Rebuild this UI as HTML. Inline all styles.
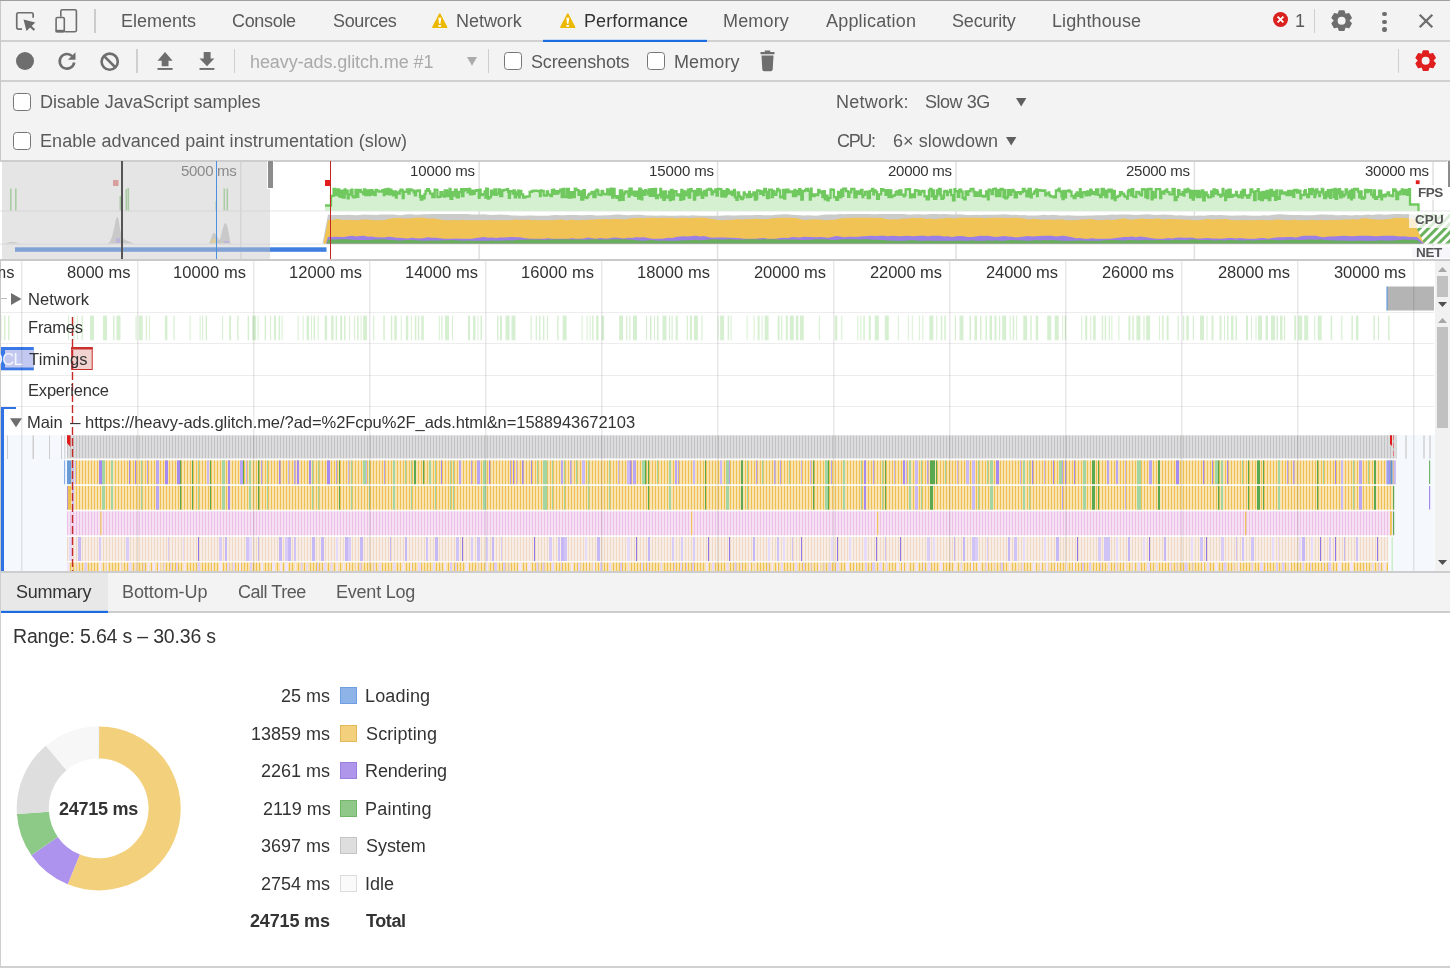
<!DOCTYPE html><html><head><meta charset="utf-8"><title>DevTools - Performance</title><style>
*{box-sizing:border-box;margin:0;padding:0}
html,body{width:1450px;height:968px;overflow:hidden;background:#fff}
body{font-family:"Liberation Sans",sans-serif;color:#333;position:relative}
.a{position:absolute}
.t{position:absolute;white-space:nowrap;line-height:1;will-change:transform}
.bar{position:absolute;left:0;width:1450px;background:#f3f3f3}
.hl{position:absolute;left:0;width:1450px;height:1px;background:#cdcdcd}
.vs{position:absolute;width:1px;background:#cfcfcf}
.cb{position:absolute;width:18px;height:18px;border:1.5px solid #767676;border-radius:3.5px;background:#fff}
svg{position:absolute;overflow:visible}
</style></head><body><div class="bar" style="top:0;height:160px"></div><div class="hl" style="top:0;background:#a0a0a0"></div><div class="hl" style="top:40px;height:2px;background:#d0d0d0"></div><div class="hl" style="top:80px;height:2px;background:#d0d0d0"></div><div class="hl" style="top:160px;height:2px;background:#cdcdcd"></div><div class="a" style="left:0;top:1px;width:1px;height:159px;background:#c8c8c8"></div><svg style="left:0;top:0" width="100" height="40" viewBox="0 0 100 40"><path d="M22 29.150H18.400A1.650 1.650 0 0 1 16.750 27.500V14.400A1.650 1.650 0 0 1 18.400 12.750H31.500A1.650 1.650 0 0 1 33.150 14.400V17.700" fill="none" stroke="#6e6e6e" stroke-width="1.700"/><path d="M23.500 19.500L35.300 22.500L26.500 31Z" fill="#6a6a6a"/><path d="M29.500 25.500L34.400 30" stroke="#6a6a6a" stroke-width="2.200"/>
<path d="M60.800 16.700V11.300A1.500 1.500 0 0 1 62.300 9.800H74.900A1.500 1.500 0 0 1 76.400 11.300V30.200A1.500 1.500 0 0 1 74.900 31.700H65" fill="none" stroke="#6e6e6e" stroke-width="1.600"/><rect x="56.100" y="17.500" width="8.200" height="14.200" rx="1.300" fill="none" stroke="#6e6e6e" stroke-width="1.600"/><rect x="55.600" y="29.800" width="9.200" height="2.600" fill="#6e6e6e"/></svg><div class="vs" style="left:94px;top:9px;height:24px;width:1.500px;background:#ccc"></div><div class="t" style="left:121.10px;top:12.00px;font-size:18px;color:#5a5a5a;">Elements</div><div class="t" style="left:232.10px;top:12.00px;font-size:18px;color:#5a5a5a;letter-spacing:-0.322px;">Console</div><div class="t" style="left:332.70px;top:12.00px;font-size:18px;color:#5a5a5a;letter-spacing:-0.372px;">Sources</div><div class="t" style="left:456.30px;top:12.00px;font-size:18px;color:#5a5a5a;letter-spacing:-0.036px;">Network</div><div class="t" style="left:583.70px;top:12.00px;font-size:18px;color:#333;letter-spacing:0.097px;">Performance</div><div class="t" style="left:723.10px;top:12.00px;font-size:18px;color:#5a5a5a;letter-spacing:0.159px;">Memory</div><div class="t" style="left:826.10px;top:12.00px;font-size:18px;color:#5a5a5a;letter-spacing:0.185px;">Application</div><div class="t" style="left:951.50px;top:12.00px;font-size:18px;color:#5a5a5a;letter-spacing:-0.174px;">Security</div><div class="t" style="left:1051.50px;top:12.00px;font-size:18px;color:#5a5a5a;letter-spacing:0.104px;">Lighthouse</div><svg style="left:431.8px;top:12.800px" width="15.500" height="15.300" viewBox="0 0 15.500 15.300"><path d="M7.750 1L14.700 14.300H0.800Z" fill="#ecb800" stroke="#ecb800" stroke-width="1.500" stroke-linejoin="round"/><path d="M6.300 4.700H9.200L8.450 10.800H7.050Z" fill="#fff"/><rect x="6.400" y="12.100" width="2.700" height="1.700" fill="#fff"/></svg><svg style="left:559.8px;top:12.800px" width="15.500" height="15.300" viewBox="0 0 15.500 15.300"><path d="M7.750 1L14.700 14.300H0.800Z" fill="#ecb800" stroke="#ecb800" stroke-width="1.500" stroke-linejoin="round"/><path d="M6.300 4.700H9.200L8.450 10.800H7.050Z" fill="#fff"/><rect x="6.400" y="12.100" width="2.700" height="1.700" fill="#fff"/></svg><div class="a" style="left:543px;top:39px;width:164px;height:1px;background:rgba(26,115,232,.18)"></div><div class="a" style="left:543px;top:40px;width:164px;height:2px;background:#1a6ce0"></div><svg style="left:1273px;top:12px" width="15" height="15" viewBox="0 0 15 15"><circle cx="7.500" cy="7.500" r="7.500" fill="#d9211e"/><path d="M4.600 4.600L10.400 10.400M10.400 4.600L4.600 10.400" stroke="#fff" stroke-width="1.900"/></svg><div class="t" style="left:1294.80px;top:12.00px;font-size:18px;color:#5a5a5a;">1</div><div class="vs" style="left:1314px;top:9px;height:24px"></div><svg style="left:1331.3px;top:10.3px" width="21.3" height="21.3" viewBox="0 0 21.3 21.3"><path d="M7.34 4.15L8.32 0.93L12.98 0.93L13.96 4.15L14.63 4.53L17.90 3.77L20.24 7.81L17.94 10.27L17.94 11.03L20.24 13.49L17.90 17.53L14.63 16.77L13.96 17.15L12.98 20.37L8.32 20.37L7.34 17.15L6.67 16.77L3.40 17.53L1.06 13.49L3.36 11.03L3.36 10.27L1.06 7.81L3.40 3.77L6.67 4.53Z" fill="#6e6e6e" stroke="#6e6e6e" stroke-width="1.400" stroke-linejoin="round"/><circle cx="10.65" cy="10.65" r="4" fill="#f3f3f3"/></svg><div class="a" style="left:1382.3px;top:12px;width:4.400px;height:4.400px;border-radius:50%;background:#6e6e6e"></div><div class="a" style="left:1382.3px;top:19.5px;width:4.400px;height:4.400px;border-radius:50%;background:#6e6e6e"></div><div class="a" style="left:1382.3px;top:27.2px;width:4.400px;height:4.400px;border-radius:50%;background:#6e6e6e"></div><svg style="left:1419px;top:14px" width="14" height="14" viewBox="0 0 14 14"><path d="M0.700 0.700L13.300 13.300M13.300 0.700L0.700 13.300" stroke="#6e6e6e" stroke-width="2.300"/></svg><div class="a" style="left:16px;top:52px;width:18px;height:18px;border-radius:50%;background:#6e6e6e"></div><svg style="left:57px;top:51px" width="20" height="20" viewBox="0 0 20 20"><path d="M15.200 5.200A7.300 7.300 0 1 0 17.200 11.500" fill="none" stroke="#6e6e6e" stroke-width="2.600"/><path d="M18.500 1.200V8.800H10.900Z" fill="#6e6e6e"/></svg><svg style="left:100px;top:52px" width="20" height="20" viewBox="0 0 20 20"><circle cx="9.700" cy="9.700" r="8.100" fill="none" stroke="#6e6e6e" stroke-width="2.600"/><path d="M3.900 3.900L15.500 15.500" stroke="#6e6e6e" stroke-width="2.600"/></svg><div class="vs" style="left:136px;top:49px;height:24px;width:1.500px"></div><svg style="left:0;top:0" width="230" height="80" viewBox="0 0 230 80"><path d="M165.050 51.900L172.600 60.700H168.500V66.300H161.700V60.700H157.500Z" fill="#6e6e6e"/><rect x="157.500" y="68" width="15.100" height="1.900" fill="#6e6e6e"/><path d="M207 66.300L214.400 58.400H210.600V51.900H203.700V58.400H199.500Z" fill="#6e6e6e"/><rect x="199.500" y="68" width="14.900" height="1.900" fill="#6e6e6e"/></svg><div class="vs" style="left:234px;top:49px;height:24px"></div><div class="t" style="left:249.70px;top:53.00px;font-size:18px;color:#aaaaaa;letter-spacing:-0.076px;">heavy-ads.glitch.me #1</div><svg style="left:466.500px;top:57px" width="10" height="9" viewBox="0 0 10 9"><path d="M0 0H10L5 8.800Z" fill="#ababab"/></svg><div class="vs" style="left:487.500px;top:49px;height:24px"></div><div class="cb" style="left:504px;top:52px"></div><div class="t" style="left:530.80px;top:53.00px;font-size:18px;color:#5a5a5a;letter-spacing:-0.145px;">Screenshots</div><div class="cb" style="left:647px;top:52px"></div><div class="t" style="left:673.60px;top:53.00px;font-size:18px;color:#5a5a5a;letter-spacing:0.119px;">Memory</div><svg style="left:760.200px;top:50px" width="15" height="22" viewBox="0 0 15 22"><path d="M4.800 0.500H10.200V2H14.500V4.200H0.500V2H4.800Z" fill="#6e6e6e"/><path d="M1.500 5.500H13.500L12.700 19.500A2 2 0 0 1 10.700 21.300H4.300A2 2 0 0 1 2.300 19.500Z" fill="#6e6e6e"/></svg><div class="vs" style="left:1398px;top:49px;height:24px"></div><svg style="left:1415.4px;top:50.2px" width="21.3" height="21.3" viewBox="0 0 21.3 21.3"><path d="M7.34 4.15L8.32 0.93L12.98 0.93L13.96 4.15L14.63 4.53L17.90 3.77L20.24 7.81L17.94 10.27L17.94 11.03L20.24 13.49L17.90 17.53L14.63 16.77L13.96 17.15L12.98 20.37L8.32 20.37L7.34 17.15L6.67 16.77L3.40 17.53L1.06 13.49L3.36 11.03L3.36 10.27L1.06 7.81L3.40 3.77L6.67 4.53Z" fill="#e01f1f" stroke="#e01f1f" stroke-width="1.400" stroke-linejoin="round"/><circle cx="10.65" cy="10.65" r="4" fill="#f3f3f3"/></svg><div class="cb" style="left:13px;top:93px"></div><div class="t" style="left:39.60px;top:93.00px;font-size:18px;color:#5a5a5a;letter-spacing:-0.024px;">Disable JavaScript samples</div><div class="cb" style="left:13px;top:132px"></div><div class="t" style="left:39.60px;top:132.00px;font-size:18px;color:#5a5a5a;letter-spacing:0.065px;">Enable advanced paint instrumentation (slow)</div><div class="t" style="left:835.70px;top:93.00px;font-size:18px;color:#5a5a5a;letter-spacing:0.226px;">Network:</div><div class="t" style="left:924.70px;top:93.00px;font-size:18px;color:#5a5a5a;letter-spacing:-0.471px;">Slow 3G</div><svg style="left:1015.800px;top:97.500px" width="10.400" height="8.500" viewBox="0 0 10 8"><path d="M0 0H10L5 8Z" fill="#5f5f5f"/></svg><div class="t" style="left:836.70px;top:132.00px;font-size:18px;color:#5a5a5a;letter-spacing:-1.368px;">CPU:</div><div class="t" style="left:892.50px;top:132.00px;font-size:18px;color:#5a5a5a;letter-spacing:0.045px;">6× slowdown</div><svg style="left:1005.900px;top:136.500px" width="10.400" height="8.500" viewBox="0 0 10 8"><path d="M0 0H10L5 8Z" fill="#5f5f5f"/></svg><div class="a" style="left:0;top:162px;width:1450px;height:97px;background:#fff"></div><svg style="left:0;top:0" width="1450" height="968" viewBox="0 0 1450 968"><rect x="240" y="162" width="1.500" height="97" fill="#e0e0e0"/><rect x="478.4" y="162" width="1.500" height="97" fill="#e0e0e0"/><rect x="716.8" y="162" width="1.500" height="97" fill="#e0e0e0"/><rect x="955.2" y="162" width="1.500" height="97" fill="#e0e0e0"/><rect x="1193.6" y="162" width="1.500" height="97" fill="#e0e0e0"/><rect x="1432.3" y="162" width="1.500" height="97" fill="#e0e0e0"/><rect x="0" y="210.500" width="1450" height="1" fill="#e6e6e6"/><rect x="0" y="243.600" width="1450" height="1" fill="#e6e6e6"/><path d="M325.0 205.5L331.0 205.5L331.0 196.1L331.8 196.1L331.8 195.8L333.6 195.8L333.6 188.9L335.1 188.9L335.1 195.2L336.9 195.2L336.9 189.5L339.1 189.5L339.1 195.8L339.9 195.8L339.9 196.9L341.1 196.9L341.1 190.7L342.9 190.7L342.9 197.6L344.7 197.6L344.7 189.3L345.5 189.3L345.5 193.7L346.5 193.7L346.5 190.7L347.7 190.7L347.7 198.3L348.7 198.3L348.7 194.5L350.5 194.5L350.5 190.5L351.7 190.5L351.7 189.7L352.5 189.7L352.5 196.5L353.5 196.5L353.5 197.3L354.3 197.3L354.3 197.0L355.5 197.0L355.5 190.0L357.0 190.0L357.0 196.9L358.2 196.9L358.2 191.2L359.0 191.2L359.0 189.8L360.8 189.8L360.8 191.8L362.0 191.8L362.0 192.1L363.2 192.1L363.2 194.2L364.0 194.2L364.0 189.5L365.2 189.5L365.2 195.1L366.7 195.1L366.7 190.4L368.5 190.4L368.5 195.2L370.3 195.2L370.3 190.2L371.5 190.2L371.5 190.1L372.5 190.1L372.5 194.4L373.5 194.4L373.5 191.8L374.5 191.8L374.5 195.2L375.7 195.2L375.7 189.8L376.7 189.8L376.7 190.6L378.5 190.6L378.5 191.5L380.0 191.5L380.0 191.6L382.2 191.6L382.2 190.1L383.7 190.1L383.7 195.1L384.7 195.1L384.7 189.4L385.7 189.4L385.7 193.9L387.5 193.9L387.5 189.0L388.7 189.0L388.7 194.3L390.2 194.3L390.2 189.6L391.4 189.6L391.4 194.0L392.9 194.0L392.9 195.4L393.7 195.4L393.7 191.5L395.9 191.5L395.9 197.6L396.7 197.6L396.7 192.3L397.9 192.3L397.9 193.6L399.7 193.6L399.7 191.1L400.5 191.1L400.5 189.6L401.7 189.6L401.7 190.0L402.7 190.0L402.7 198.2L403.7 198.2L403.7 191.7L404.7 191.7L404.7 191.8L406.9 191.8L406.9 189.4L408.4 189.4L408.4 193.6L409.6 193.6L409.6 189.4L411.4 189.4L411.4 190.3L413.6 190.3L413.6 192.3L414.8 192.3L414.8 195.4L416.0 195.4L416.0 191.0L417.8 191.0L417.8 190.5L420.0 190.5L420.0 196.8L420.8 196.8L420.8 199.6L422.3 199.6L422.3 196.0L423.1 196.0L423.1 198.4L424.6 198.4L424.6 194.1L425.6 194.1L425.6 190.9L427.1 190.9L427.1 189.2L428.9 189.2L428.9 191.2L430.1 191.2L430.1 193.6L432.3 193.6L432.3 197.2L433.8 197.2L433.8 197.0L434.6 197.0L434.6 189.7L435.6 189.7L435.6 189.9L437.4 189.9L437.4 197.1L438.6 197.1L438.6 196.8L440.4 196.8L440.4 192.2L442.2 192.2L442.2 195.5L443.7 195.5L443.7 196.6L444.7 196.6L444.7 190.4L446.9 190.4L446.9 196.2L448.7 196.2L448.7 191.7L449.5 191.7L449.5 188.8L450.5 188.8L450.5 198.8L452.3 198.8L452.3 192.1L453.1 192.1L453.1 195.5L454.9 195.5L454.9 189.7L456.7 189.7L456.7 197.3L458.9 197.3L458.9 192.0L460.1 192.0L460.1 192.1L461.1 192.1L461.1 189.1L461.9 189.1L461.9 196.2L463.4 196.2L463.4 191.2L464.2 191.2L464.2 189.2L466.4 189.2L466.4 190.0L467.6 190.0L467.6 192.4L468.6 192.4L468.6 189.0L470.1 189.0L470.1 194.4L472.3 194.4L472.3 190.6L473.5 190.6L473.5 193.9L474.7 193.9L474.7 190.8L476.2 190.8L476.2 190.1L478.0 190.1L478.0 190.6L478.8 190.6L478.8 197.8L479.6 197.8L479.6 189.7L480.6 189.7L480.6 195.2L482.8 195.2L482.8 194.1L484.6 194.1L484.6 191.3L485.4 191.3L485.4 197.6L486.2 197.6L486.2 188.7L487.0 188.7L487.0 188.9L488.0 188.9L488.0 198.6L489.2 198.6L489.2 197.2L491.0 197.2L491.0 190.7L492.0 190.7L492.0 192.4L493.2 192.4L493.2 194.7L494.4 194.7L494.4 189.4L495.9 189.4L495.9 194.9L496.7 194.9L496.7 193.6L498.5 193.6L498.5 189.3L500.0 189.3L500.0 196.1L502.2 196.1L502.2 190.5L503.7 190.5L503.7 189.8L504.7 189.8L504.7 189.9L506.9 189.9L506.9 189.1L508.1 189.1L508.1 191.9L508.9 191.9L508.9 197.9L509.9 197.9L509.9 191.2L511.4 191.2L511.4 191.2L512.6 191.2L512.6 193.7L513.6 193.7L513.6 190.3L514.8 190.3L514.8 197.4L516.0 197.4L516.0 192.4L517.2 192.4L517.2 194.8L518.0 194.8L518.0 190.6L519.0 190.6L519.0 197.3L519.8 197.3L519.8 190.9L521.3 190.9L521.3 194.4L523.1 194.4L523.1 197.5L525.3 197.5L525.3 196.6L527.5 196.6L527.5 196.4L529.7 196.4L529.7 191.8L531.9 191.8L531.9 191.0L534.1 191.0L534.1 190.6L535.9 190.6L535.9 190.8L536.7 190.8L536.7 190.9L538.9 190.9L538.9 191.3L539.9 191.3L539.9 196.0L540.7 196.0L540.7 190.4L541.5 190.4L541.5 191.0L543.7 191.0L543.7 195.3L544.5 195.3L544.5 195.6L546.7 195.6L546.7 191.5L548.2 191.5L548.2 194.6L550.4 194.6L550.4 196.1L551.9 196.1L551.9 190.1L553.4 190.1L553.4 189.7L554.2 189.7L554.2 193.8L555.2 193.8L555.2 191.1L557.4 191.1L557.4 193.5L558.2 193.5L558.2 192.4L559.0 192.4L559.0 191.2L560.2 191.2L560.2 189.7L561.7 189.7L561.7 197.1L562.7 197.1L562.7 188.9L564.2 188.9L564.2 196.8L565.7 196.8L565.7 197.2L566.7 197.2L566.7 189.0L568.9 189.0L568.9 197.5L571.1 197.5L571.1 192.1L573.3 192.1L573.3 197.0L574.8 197.0L574.8 188.6L576.3 188.6L576.3 190.2L578.5 190.2L578.5 194.8L579.7 194.8L579.7 191.5L581.2 191.5L581.2 199.5L583.4 199.5L583.4 190.1L584.9 190.1L584.9 197.3L586.4 197.3L586.4 198.0L587.2 198.0L587.2 197.2L588.2 197.2L588.2 194.8L589.4 194.8L589.4 193.6L591.6 193.6L591.6 192.0L593.4 192.0L593.4 197.2L595.6 197.2L595.6 191.0L596.6 191.0L596.6 189.7L597.4 189.7L597.4 190.7L598.4 190.7L598.4 194.7L600.6 194.7L600.6 195.1L601.6 195.1L601.6 190.8L603.1 190.8L603.1 193.8L604.9 193.8L604.9 194.4L606.1 194.4L606.1 194.1L607.1 194.1L607.1 189.3L608.9 189.3L608.9 194.5L610.7 194.5L610.7 188.7L612.2 188.7L612.2 197.7L613.4 197.7L613.4 188.8L614.6 188.8L614.6 196.2L616.4 196.2L616.4 197.8L617.6 197.8L617.6 196.1L619.1 196.1L619.1 200.1L619.9 200.1L619.9 190.3L621.4 190.3L621.4 190.5L622.2 190.5L622.2 199.9L623.7 199.9L623.7 193.9L624.7 193.9L624.7 192.4L625.5 192.4L625.5 191.4L627.7 191.4L627.7 192.1L628.5 192.1L628.5 196.6L629.5 196.6L629.5 188.7L631.7 188.7L631.7 194.5L633.9 194.5L633.9 191.6L634.7 191.6L634.7 195.8L636.2 195.8L636.2 191.7L637.0 191.7L637.0 195.3L638.2 195.3L638.2 198.7L639.2 198.7L639.2 188.7L640.7 188.7L640.7 189.8L641.5 189.8L641.5 199.3L642.3 199.3L642.3 191.2L643.5 191.2L643.5 194.9L645.0 194.9L645.0 190.1L645.8 190.1L645.8 191.5L647.6 191.5L647.6 194.3L648.6 194.3L648.6 189.5L649.8 189.5L649.8 195.9L650.8 195.9L650.8 192.2L651.6 192.2L651.6 189.2L653.1 189.2L653.1 195.9L654.6 195.9L654.6 188.8L656.1 188.8L656.1 198.1L656.9 198.1L656.9 198.2L657.9 198.2L657.9 195.4L659.1 195.4L659.1 195.0L660.3 195.0L660.3 189.0L661.1 189.0L661.1 197.3L661.9 197.3L661.9 191.6L663.4 191.6L663.4 199.9L664.9 199.9L664.9 191.4L665.9 191.4L665.9 197.7L667.1 197.7L667.1 196.0L668.1 196.0L668.1 197.1L668.9 197.1L668.9 191.7L669.7 191.7L669.7 200.1L670.9 200.1L670.9 189.9L672.7 189.9L672.7 199.4L673.9 199.4L673.9 191.4L675.7 191.4L675.7 191.1L676.5 191.1L676.5 195.4L678.0 195.4L678.0 194.5L679.5 194.5L679.5 195.5L680.3 195.5L680.3 199.9L681.3 199.9L681.3 189.9L682.5 189.9L682.5 199.1L684.3 199.1L684.3 191.5L685.3 191.5L685.3 195.4L687.1 195.4L687.1 192.4L687.9 192.4L687.9 189.6L688.7 189.6L688.7 197.5L690.2 197.5L690.2 189.1L691.7 189.1L691.7 191.2L693.9 191.2L693.9 199.7L695.1 199.7L695.1 190.8L696.3 190.8L696.3 195.3L697.3 195.3L697.3 189.2L699.1 189.2L699.1 194.5L700.1 194.5L700.1 189.5L700.9 189.5L700.9 192.5L701.7 192.5L701.7 197.8L703.2 197.8L703.2 194.7L704.0 194.7L704.0 190.9L705.8 190.9L705.8 195.6L706.8 195.6L706.8 189.6L709.0 189.6L709.0 189.0L710.8 189.0L710.8 190.0L711.6 190.0L711.6 194.3L712.8 194.3L712.8 191.5L713.8 191.5L713.8 191.8L715.3 191.8L715.3 189.3L716.5 189.3L716.5 195.5L718.0 195.5L718.0 189.0L719.5 189.0L719.5 189.2L721.3 189.2L721.3 196.3L722.8 196.3L722.8 195.2L723.6 195.2L723.6 190.8L724.8 190.8L724.8 196.6L726.0 196.6L726.0 195.1L726.8 195.1L726.8 189.2L727.6 189.2L727.6 190.2L728.8 190.2L728.8 193.6L730.6 193.6L730.6 191.7L732.1 191.7L732.1 195.0L733.9 195.0L733.9 190.0L734.9 190.0L734.9 197.4L736.4 197.4L736.4 199.8L737.6 199.8L737.6 192.3L739.1 192.3L739.1 196.0L739.9 196.0L739.9 196.8L740.9 196.8L740.9 199.2L742.7 199.2L742.7 197.6L743.7 197.6L743.7 192.3L744.7 192.3L744.7 194.5L746.9 194.5L746.9 197.0L749.1 197.0L749.1 191.9L749.9 191.9L749.9 196.9L751.1 196.9L751.1 194.5L752.6 194.5L752.6 195.3L753.4 195.3L753.4 192.4L754.9 192.4L754.9 199.7L756.4 199.7L756.4 198.4L757.2 198.4L757.2 190.3L758.0 190.3L758.0 190.6L760.2 190.6L760.2 193.8L762.4 193.8L762.4 191.4L763.2 191.4L763.2 195.0L764.2 195.0L764.2 188.9L766.0 188.9L766.0 191.8L767.0 191.8L767.0 198.0L768.0 198.0L768.0 197.8L769.2 197.8L769.2 189.6L770.4 189.6L770.4 189.7L771.9 189.7L771.9 197.2L772.9 197.2L772.9 191.0L773.9 191.0L773.9 194.2L774.9 194.2L774.9 194.8L776.4 194.8L776.4 191.7L777.2 191.7L777.2 188.8L778.4 188.8L778.4 190.4L780.2 190.4L780.2 197.4L782.0 197.4L782.0 196.7L783.2 196.7L783.2 190.0L784.2 190.0L784.2 198.5L785.2 198.5L785.2 192.3L786.4 192.3L786.4 189.6L788.6 189.6L788.6 192.0L790.8 192.0L790.8 191.5L793.0 191.5L793.0 196.0L794.5 196.0L794.5 190.0L795.3 190.0L795.3 196.1L796.1 196.1L796.1 190.8L797.3 190.8L797.3 194.4L799.1 194.4L799.1 189.1L800.3 189.1L800.3 190.5L801.3 190.5L801.3 199.5L802.8 199.5L802.8 191.1L805.0 191.1L805.0 190.2L806.2 190.2L806.2 188.8L808.0 188.8L808.0 190.9L809.8 190.9L809.8 199.6L810.8 199.6L810.8 188.6L811.6 188.6L811.6 194.5L812.4 194.5L812.4 196.0L814.6 196.0L814.6 194.3L816.4 194.3L816.4 195.2L818.2 195.2L818.2 189.8L819.4 189.8L819.4 192.5L821.6 192.5L821.6 191.4L822.4 191.4L822.4 197.1L823.2 197.1L823.2 194.4L824.0 194.4L824.0 191.1L824.8 191.1L824.8 199.4L826.0 199.4L826.0 195.7L827.5 195.7L827.5 200.4L828.7 200.4L828.7 197.8L830.5 197.8L830.5 189.6L831.5 189.6L831.5 189.4L832.5 189.4L832.5 189.9L834.0 189.9L834.0 197.1L836.2 197.1L836.2 199.9L838.0 199.9L838.0 191.9L840.2 191.9L840.2 197.3L841.2 197.3L841.2 189.8L842.2 189.8L842.2 195.8L843.2 195.8L843.2 188.7L844.0 188.7L844.0 189.2L845.0 189.2L845.0 188.7L846.0 188.7L846.0 191.1L848.2 191.1L848.2 196.9L849.4 196.9L849.4 192.3L851.2 192.3L851.2 188.9L853.4 188.9L853.4 189.0L854.4 189.0L854.4 197.3L856.6 197.3L856.6 191.5L858.8 191.5L858.8 193.9L861.0 193.9L861.0 189.8L862.5 189.8L862.5 197.2L863.3 197.2L863.3 194.8L865.1 194.8L865.1 191.9L866.9 191.9L866.9 191.7L867.7 191.7L867.7 198.2L869.9 198.2L869.9 190.8L872.1 190.8L872.1 189.0L873.3 189.0L873.3 194.3L874.1 194.3L874.1 190.5L875.6 190.5L875.6 191.8L877.1 191.8L877.1 198.8L878.9 198.8L878.9 194.4L881.1 194.4L881.1 189.2L883.3 189.2L883.3 190.5L885.5 190.5L885.5 194.8L886.3 194.8L886.3 190.1L888.5 190.1L888.5 197.1L889.5 197.1L889.5 190.3L891.3 190.3L891.3 197.0L892.3 197.0L892.3 195.9L894.5 195.9L894.5 194.9L895.7 194.9L895.7 192.0L897.2 192.0L897.2 191.5L898.2 191.5L898.2 194.5L899.2 194.5L899.2 190.4L901.4 190.4L901.4 194.7L903.6 194.7L903.6 196.4L904.6 196.4L904.6 194.9L905.6 194.9L905.6 189.3L907.8 189.3L907.8 189.2L910.0 189.2L910.0 197.4L911.2 197.4L911.2 194.3L913.4 194.3L913.4 197.0L914.9 197.0L914.9 190.2L916.4 190.2L916.4 190.6L918.6 190.6L918.6 194.5L920.8 194.5L920.8 191.5L922.3 191.5L922.3 190.9L924.5 190.9L924.5 196.4L926.7 196.4L926.7 199.4L928.9 199.4L928.9 190.3L930.1 190.3L930.1 189.0L931.6 189.0L931.6 196.4L932.6 196.4L932.6 190.3L934.1 190.3L934.1 198.8L936.3 198.8L936.3 196.1L937.1 196.1L937.1 190.5L937.9 190.5L937.9 194.1L938.9 194.1L938.9 189.0L940.7 189.0L940.7 195.4L941.5 195.4L941.5 198.8L943.0 198.8L943.0 197.5L944.0 197.5L944.0 191.6L944.8 191.6L944.8 191.0L947.0 191.0L947.0 195.1L947.8 195.1L947.8 192.2L950.0 192.2L950.0 190.0L951.2 190.0L951.2 195.1L953.0 195.1L953.0 200.4L954.5 200.4L954.5 189.1L955.3 189.1L955.3 191.1L956.8 191.1L956.8 191.4L957.8 191.4L957.8 196.8L959.3 196.8L959.3 189.7L961.1 189.7L961.1 191.6L962.6 191.6L962.6 197.9L964.1 197.9L964.1 199.4L965.6 199.4L965.6 191.4L966.8 191.4L966.8 194.8L968.3 194.8L968.3 191.1L970.5 191.1L970.5 189.2L971.7 189.2L971.7 188.8L973.5 188.8L973.5 191.7L974.5 191.7L974.5 195.8L976.7 195.8L976.7 192.3L978.9 192.3L978.9 195.8L979.9 195.8L979.9 190.4L980.9 190.4L980.9 195.6L982.7 195.6L982.7 196.6L984.9 196.6L984.9 196.0L986.1 196.0L986.1 191.3L987.9 191.3L987.9 199.3L988.7 199.3L988.7 189.6L989.7 189.6L989.7 190.4L991.5 190.4L991.5 194.1L993.0 194.1L993.0 189.2L994.8 189.2L994.8 188.6L996.0 188.6L996.0 196.2L997.5 196.2L997.5 190.2L999.7 190.2L999.7 196.0L1000.5 196.0L1000.5 188.8L1002.7 188.8L1002.7 189.9L1003.5 189.9L1003.5 197.1L1004.3 197.1L1004.3 190.2L1005.3 190.2L1005.3 198.3L1006.8 198.3L1006.8 197.1L1008.0 197.1L1008.0 190.2L1009.8 190.2L1009.8 194.9L1011.3 194.9L1011.3 190.6L1012.5 190.6L1012.5 189.9L1013.5 189.9L1013.5 191.7L1014.7 191.7L1014.7 197.4L1016.9 197.4L1016.9 192.5L1018.4 192.5L1018.4 192.1L1020.2 192.1L1020.2 193.9L1021.0 193.9L1021.0 192.2L1022.8 192.2L1022.8 188.8L1024.6 188.8L1024.6 191.0L1026.4 191.0L1026.4 196.3L1028.6 196.3L1028.6 188.8L1030.8 188.8L1030.8 197.4L1031.8 197.4L1031.8 193.9L1034.0 193.9L1034.0 192.0L1035.0 192.0L1035.0 190.8L1036.2 190.8L1036.2 189.3L1037.0 189.3L1037.0 196.1L1037.8 196.1L1037.8 190.6L1038.6 190.6L1038.6 190.2L1040.8 190.2L1040.8 190.3L1041.6 190.3L1041.6 190.9L1043.8 190.9L1043.8 190.5L1045.3 190.5L1045.3 195.4L1046.3 195.4L1046.3 193.5L1048.5 193.5L1048.5 192.4L1049.3 192.4L1049.3 195.4L1050.5 195.4L1050.5 196.4L1051.5 196.4L1051.5 196.5L1053.7 196.5L1053.7 197.3L1055.9 197.3L1055.9 190.5L1058.1 190.5L1058.1 189.6L1058.9 189.6L1058.9 188.6L1059.7 188.6L1059.7 191.3L1061.5 191.3L1061.5 196.4L1062.5 196.4L1062.5 199.1L1063.7 199.1L1063.7 190.8L1065.2 190.8L1065.2 197.4L1066.0 197.4L1066.0 191.1L1068.2 191.1L1068.2 190.5L1069.7 190.5L1069.7 191.7L1071.5 191.7L1071.5 196.0L1073.7 196.0L1073.7 198.2L1075.5 198.2L1075.5 194.1L1076.7 194.1L1076.7 192.4L1077.7 192.4L1077.7 195.9L1078.7 195.9L1078.7 193.5L1079.9 193.5L1079.9 189.2L1080.7 189.2L1080.7 197.1L1082.5 197.1L1082.5 192.4L1084.3 192.4L1084.3 192.2L1085.5 192.2L1085.5 195.4L1087.0 195.4L1087.0 191.5L1088.0 191.5L1088.0 195.1L1090.2 195.1L1090.2 189.6L1091.0 189.6L1091.0 190.4L1091.8 190.4L1091.8 193.8L1093.3 193.8L1093.3 192.1L1095.1 192.1L1095.1 194.3L1096.1 194.3L1096.1 189.3L1098.3 189.3L1098.3 194.9L1100.1 194.9L1100.1 197.2L1101.6 197.2L1101.6 189.0L1103.8 189.0L1103.8 194.8L1104.6 194.8L1104.6 190.6L1105.4 190.6L1105.4 197.0L1107.2 197.0L1107.2 190.8L1108.4 190.8L1108.4 189.7L1109.2 189.7L1109.2 191.6L1111.0 191.6L1111.0 189.6L1111.8 189.6L1111.8 198.3L1112.6 198.3L1112.6 190.8L1114.8 190.8L1114.8 200.2L1115.6 200.2L1115.6 197.2L1117.8 197.2L1117.8 195.8L1120.0 195.8L1120.0 192.2L1121.8 192.2L1121.8 194.1L1122.8 194.1L1122.8 193.7L1124.0 193.7L1124.0 195.7L1124.8 195.7L1124.8 196.6L1127.0 196.6L1127.0 198.7L1127.8 198.7L1127.8 191.5L1128.8 191.5L1128.8 189.8L1130.6 189.8L1130.6 195.4L1131.8 195.4L1131.8 189.1L1133.3 189.1L1133.3 196.7L1135.5 196.7L1135.5 197.2L1136.3 197.2L1136.3 191.8L1137.1 191.8L1137.1 192.0L1139.3 192.0L1139.3 193.9L1140.8 193.9L1140.8 195.3L1142.0 195.3L1142.0 189.5L1142.8 189.5L1142.8 189.2L1143.8 189.2L1143.8 189.3L1145.3 189.3L1145.3 197.0L1146.5 197.0L1146.5 189.6L1147.3 189.6L1147.3 198.2L1148.3 198.2L1148.3 189.0L1149.8 189.0L1149.8 189.0L1151.6 189.0L1151.6 199.3L1152.6 199.3L1152.6 191.9L1153.4 191.9L1153.4 195.0L1154.6 195.0L1154.6 197.3L1155.8 197.3L1155.8 189.2L1158.0 189.2L1158.0 189.2L1160.2 189.2L1160.2 198.2L1161.2 198.2L1161.2 191.7L1163.0 191.7L1163.0 193.7L1164.5 193.7L1164.5 190.8L1165.5 190.8L1165.5 190.6L1166.5 190.6L1166.5 189.4L1167.3 189.4L1167.3 192.1L1169.5 192.1L1169.5 194.3L1171.3 194.3L1171.3 194.3L1172.5 194.3L1172.5 188.9L1174.7 188.9L1174.7 200.2L1176.5 200.2L1176.5 196.9L1178.0 196.9L1178.0 190.2L1179.5 190.2L1179.5 194.5L1181.3 194.5L1181.3 194.2L1182.5 194.2L1182.5 191.9L1183.7 191.9L1183.7 195.6L1184.5 195.6L1184.5 189.6L1185.7 189.6L1185.7 192.0L1187.5 192.0L1187.5 188.8L1188.3 188.8L1188.3 190.5L1190.1 190.5L1190.1 197.5L1191.1 197.5L1191.1 194.2L1191.9 194.2L1191.9 190.8L1192.7 190.8L1192.7 199.6L1193.9 199.6L1193.9 190.9L1195.7 190.9L1195.7 195.3L1196.9 195.3L1196.9 197.2L1197.7 197.2L1197.7 190.9L1198.9 190.9L1198.9 197.0L1200.7 197.0L1200.7 192.0L1201.7 192.0L1201.7 190.4L1203.2 190.4L1203.2 200.3L1204.7 200.3L1204.7 195.9L1205.5 195.9L1205.5 192.3L1206.7 192.3L1206.7 194.8L1208.2 194.8L1208.2 197.4L1209.4 197.4L1209.4 197.2L1211.2 197.2L1211.2 191.3L1212.4 191.3L1212.4 196.0L1213.6 196.0L1213.6 189.3L1214.8 189.3L1214.8 193.6L1215.8 193.6L1215.8 190.1L1217.3 190.1L1217.3 191.8L1218.1 191.8L1218.1 194.6L1220.3 194.6L1220.3 196.7L1221.1 196.7L1221.1 195.6L1222.6 195.6L1222.6 188.8L1223.4 188.8L1223.4 194.0L1225.2 194.0L1225.2 200.2L1226.0 200.2L1226.0 190.7L1227.0 190.7L1227.0 197.0L1228.5 197.0L1228.5 189.7L1230.7 189.7L1230.7 196.9L1232.5 196.9L1232.5 195.0L1234.3 195.0L1234.3 195.7L1236.1 195.7L1236.1 191.8L1236.9 191.8L1236.9 195.5L1238.4 195.5L1238.4 197.2L1239.4 197.2L1239.4 195.7L1240.9 195.7L1240.9 192.0L1241.9 192.0L1241.9 197.6L1242.7 197.6L1242.7 190.0L1244.9 190.0L1244.9 195.3L1247.1 195.3L1247.1 197.5L1249.3 197.5L1249.3 194.8L1250.5 194.8L1250.5 189.4L1252.3 189.4L1252.3 191.8L1254.1 191.8L1254.1 200.2L1255.6 200.2L1255.6 191.1L1257.8 191.1L1257.8 189.1L1258.6 189.1L1258.6 199.1L1260.1 199.1L1260.1 192.5L1261.1 192.5L1261.1 200.1L1262.9 200.1L1262.9 191.9L1265.1 191.9L1265.1 198.0L1266.6 198.0L1266.6 190.9L1268.8 190.9L1268.8 200.0L1270.3 200.0L1270.3 189.8L1272.1 189.8L1272.1 195.8L1273.9 195.8L1273.9 191.8L1275.1 191.8L1275.1 199.9L1276.3 199.9L1276.3 190.3L1277.1 190.3L1277.1 197.1L1278.3 197.1L1278.3 198.9L1279.8 198.9L1279.8 190.6L1282.0 190.6L1282.0 193.7L1284.2 193.7L1284.2 192.3L1286.4 192.3L1286.4 195.1L1288.2 195.1L1288.2 190.8L1290.0 190.8L1290.0 195.2L1291.5 195.2L1291.5 191.0L1293.3 191.0L1293.3 196.8L1294.3 196.8L1294.3 190.0L1295.1 190.0L1295.1 190.6L1295.9 190.6L1295.9 189.8L1297.1 189.8L1297.1 192.5L1298.6 192.5L1298.6 190.6L1300.4 190.6L1300.4 198.4L1301.2 198.4L1301.2 194.9L1303.4 194.9L1303.4 195.1L1304.2 195.1L1304.2 191.3L1305.0 191.3L1305.0 190.2L1305.8 190.2L1305.8 194.3L1307.3 194.3L1307.3 197.0L1309.1 197.0L1309.1 189.2L1310.1 189.2L1310.1 194.1L1311.9 194.1L1311.9 189.0L1312.9 189.0L1312.9 190.5L1314.4 190.5L1314.4 197.2L1315.2 197.2L1315.2 194.1L1316.2 194.1L1316.2 189.3L1317.4 189.3L1317.4 192.0L1319.2 192.0L1319.2 196.0L1320.0 196.0L1320.0 192.1L1321.8 192.1L1321.8 188.8L1322.6 188.8L1322.6 189.6L1323.4 189.6L1323.4 194.2L1324.2 194.2L1324.2 198.1L1326.0 198.1L1326.0 192.1L1326.8 192.1L1326.8 196.4L1327.8 196.4L1327.8 190.2L1330.0 190.2L1330.0 197.9L1331.0 197.9L1331.0 190.1L1331.8 190.1L1331.8 189.7L1333.6 189.7L1333.6 197.0L1334.8 197.0L1334.8 188.9L1335.6 188.9L1335.6 198.9L1337.1 198.9L1337.1 189.7L1338.1 189.7L1338.1 193.6L1339.1 193.6L1339.1 189.1L1340.1 189.1L1340.1 197.4L1341.6 197.4L1341.6 191.7L1342.6 191.7L1342.6 196.4L1344.1 196.4L1344.1 194.7L1345.6 194.7L1345.6 189.5L1347.1 189.5L1347.1 192.3L1348.3 192.3L1348.3 197.5L1350.1 197.5L1350.1 191.0L1351.1 191.0L1351.1 199.4L1351.9 199.4L1351.9 189.7L1353.4 189.7L1353.4 197.5L1354.2 197.5L1354.2 188.9L1355.2 188.9L1355.2 189.5L1356.2 189.5L1356.2 189.0L1358.0 189.0L1358.0 191.7L1359.2 191.7L1359.2 197.3L1360.4 197.3L1360.4 191.4L1361.6 191.4L1361.6 198.6L1363.8 198.6L1363.8 197.5L1365.0 197.5L1365.0 190.0L1367.2 190.0L1367.2 192.1L1368.0 192.1L1368.0 191.3L1369.0 191.3L1369.0 190.2L1371.2 190.2L1371.2 194.6L1373.0 194.6L1373.0 197.1L1373.8 197.1L1373.8 190.3L1375.0 190.3L1375.0 198.9L1377.2 198.9L1377.2 196.9L1379.0 196.9L1379.0 190.6L1380.5 190.6L1380.5 190.8L1381.3 190.8L1381.3 199.3L1382.1 199.3L1382.1 196.3L1383.1 196.3L1383.1 194.8L1384.3 194.8L1384.3 196.3L1385.8 196.3L1385.8 194.4L1387.6 194.4L1387.6 192.3L1389.1 192.3L1389.1 195.5L1391.3 195.5L1391.3 195.3L1392.1 195.3L1392.1 196.2L1393.1 196.2L1393.1 189.3L1395.3 189.3L1395.3 190.8L1396.3 190.8L1396.3 199.2L1398.1 199.2L1398.1 192.4L1399.1 192.4L1399.1 194.3L1400.3 194.3L1400.3 191.3L1401.8 191.3L1401.8 189.5L1402.8 189.5L1402.8 194.0L1405.0 194.0L1405.0 189.8L1407.2 189.8L1407.2 194.8L1408.0 194.8L1408.0 191.6L1409.0 191.6L1409.0 189.2L1410.0 189.2L1410.0 204.5L1418.5 204.5L1418.500 211L325 211Z" fill="#d5efd1"/><path d="M325.0 205.5L331.0 205.5L331.0 196.1L331.8 196.1L331.8 195.8L333.6 195.8L333.6 188.9L335.1 188.9L335.1 195.2L336.9 195.2L336.9 189.5L339.1 189.5L339.1 195.8L339.9 195.8L339.9 196.9L341.1 196.9L341.1 190.7L342.9 190.7L342.9 197.6L344.7 197.6L344.7 189.3L345.5 189.3L345.5 193.7L346.5 193.7L346.5 190.7L347.7 190.7L347.7 198.3L348.7 198.3L348.7 194.5L350.5 194.5L350.5 190.5L351.7 190.5L351.7 189.7L352.5 189.7L352.5 196.5L353.5 196.5L353.5 197.3L354.3 197.3L354.3 197.0L355.5 197.0L355.5 190.0L357.0 190.0L357.0 196.9L358.2 196.9L358.2 191.2L359.0 191.2L359.0 189.8L360.8 189.8L360.8 191.8L362.0 191.8L362.0 192.1L363.2 192.1L363.2 194.2L364.0 194.2L364.0 189.5L365.2 189.5L365.2 195.1L366.7 195.1L366.7 190.4L368.5 190.4L368.5 195.2L370.3 195.2L370.3 190.2L371.5 190.2L371.5 190.1L372.5 190.1L372.5 194.4L373.5 194.4L373.5 191.8L374.5 191.8L374.5 195.2L375.7 195.2L375.7 189.8L376.7 189.8L376.7 190.6L378.5 190.6L378.5 191.5L380.0 191.5L380.0 191.6L382.2 191.6L382.2 190.1L383.7 190.1L383.7 195.1L384.7 195.1L384.7 189.4L385.7 189.4L385.7 193.9L387.5 193.9L387.5 189.0L388.7 189.0L388.7 194.3L390.2 194.3L390.2 189.6L391.4 189.6L391.4 194.0L392.9 194.0L392.9 195.4L393.7 195.4L393.7 191.5L395.9 191.5L395.9 197.6L396.7 197.6L396.7 192.3L397.9 192.3L397.9 193.6L399.7 193.6L399.7 191.1L400.5 191.1L400.5 189.6L401.7 189.6L401.7 190.0L402.7 190.0L402.7 198.2L403.7 198.2L403.7 191.7L404.7 191.7L404.7 191.8L406.9 191.8L406.9 189.4L408.4 189.4L408.4 193.6L409.6 193.6L409.6 189.4L411.4 189.4L411.4 190.3L413.6 190.3L413.6 192.3L414.8 192.3L414.8 195.4L416.0 195.4L416.0 191.0L417.8 191.0L417.8 190.5L420.0 190.5L420.0 196.8L420.8 196.8L420.8 199.6L422.3 199.6L422.3 196.0L423.1 196.0L423.1 198.4L424.6 198.4L424.6 194.1L425.6 194.1L425.6 190.9L427.1 190.9L427.1 189.2L428.9 189.2L428.9 191.2L430.1 191.2L430.1 193.6L432.3 193.6L432.3 197.2L433.8 197.2L433.8 197.0L434.6 197.0L434.6 189.7L435.6 189.7L435.6 189.9L437.4 189.9L437.4 197.1L438.6 197.1L438.6 196.8L440.4 196.8L440.4 192.2L442.2 192.2L442.2 195.5L443.7 195.5L443.7 196.6L444.7 196.6L444.7 190.4L446.9 190.4L446.9 196.2L448.7 196.2L448.7 191.7L449.5 191.7L449.5 188.8L450.5 188.8L450.5 198.8L452.3 198.8L452.3 192.1L453.1 192.1L453.1 195.5L454.9 195.5L454.9 189.7L456.7 189.7L456.7 197.3L458.9 197.3L458.9 192.0L460.1 192.0L460.1 192.1L461.1 192.1L461.1 189.1L461.9 189.1L461.9 196.2L463.4 196.2L463.4 191.2L464.2 191.2L464.2 189.2L466.4 189.2L466.4 190.0L467.6 190.0L467.6 192.4L468.6 192.4L468.6 189.0L470.1 189.0L470.1 194.4L472.3 194.4L472.3 190.6L473.5 190.6L473.5 193.9L474.7 193.9L474.7 190.8L476.2 190.8L476.2 190.1L478.0 190.1L478.0 190.6L478.8 190.6L478.8 197.8L479.6 197.8L479.6 189.7L480.6 189.7L480.6 195.2L482.8 195.2L482.8 194.1L484.6 194.1L484.6 191.3L485.4 191.3L485.4 197.6L486.2 197.6L486.2 188.7L487.0 188.7L487.0 188.9L488.0 188.9L488.0 198.6L489.2 198.6L489.2 197.2L491.0 197.2L491.0 190.7L492.0 190.7L492.0 192.4L493.2 192.4L493.2 194.7L494.4 194.7L494.4 189.4L495.9 189.4L495.9 194.9L496.7 194.9L496.7 193.6L498.5 193.6L498.5 189.3L500.0 189.3L500.0 196.1L502.2 196.1L502.2 190.5L503.7 190.5L503.7 189.8L504.7 189.8L504.7 189.9L506.9 189.9L506.9 189.1L508.1 189.1L508.1 191.9L508.9 191.9L508.9 197.9L509.9 197.9L509.9 191.2L511.4 191.2L511.4 191.2L512.6 191.2L512.6 193.7L513.6 193.7L513.6 190.3L514.8 190.3L514.8 197.4L516.0 197.4L516.0 192.4L517.2 192.4L517.2 194.8L518.0 194.8L518.0 190.6L519.0 190.6L519.0 197.3L519.8 197.3L519.8 190.9L521.3 190.9L521.3 194.4L523.1 194.4L523.1 197.5L525.3 197.5L525.3 196.6L527.5 196.6L527.5 196.4L529.7 196.4L529.7 191.8L531.9 191.8L531.9 191.0L534.1 191.0L534.1 190.6L535.9 190.6L535.9 190.8L536.7 190.8L536.7 190.9L538.9 190.9L538.9 191.3L539.9 191.3L539.9 196.0L540.7 196.0L540.7 190.4L541.5 190.4L541.5 191.0L543.7 191.0L543.7 195.3L544.5 195.3L544.5 195.6L546.7 195.6L546.7 191.5L548.2 191.5L548.2 194.6L550.4 194.6L550.4 196.1L551.9 196.1L551.9 190.1L553.4 190.1L553.4 189.7L554.2 189.7L554.2 193.8L555.2 193.8L555.2 191.1L557.4 191.1L557.4 193.5L558.2 193.5L558.2 192.4L559.0 192.4L559.0 191.2L560.2 191.2L560.2 189.7L561.7 189.7L561.7 197.1L562.7 197.1L562.7 188.9L564.2 188.9L564.2 196.8L565.7 196.8L565.7 197.2L566.7 197.2L566.7 189.0L568.9 189.0L568.9 197.5L571.1 197.5L571.1 192.1L573.3 192.1L573.3 197.0L574.8 197.0L574.8 188.6L576.3 188.6L576.3 190.2L578.5 190.2L578.5 194.8L579.7 194.8L579.7 191.5L581.2 191.5L581.2 199.5L583.4 199.5L583.4 190.1L584.9 190.1L584.9 197.3L586.4 197.3L586.4 198.0L587.2 198.0L587.2 197.2L588.2 197.2L588.2 194.8L589.4 194.8L589.4 193.6L591.6 193.6L591.6 192.0L593.4 192.0L593.4 197.2L595.6 197.2L595.6 191.0L596.6 191.0L596.6 189.7L597.4 189.7L597.4 190.7L598.4 190.7L598.4 194.7L600.6 194.7L600.6 195.1L601.6 195.1L601.6 190.8L603.1 190.8L603.1 193.8L604.9 193.8L604.9 194.4L606.1 194.4L606.1 194.1L607.1 194.1L607.1 189.3L608.9 189.3L608.9 194.5L610.7 194.5L610.7 188.7L612.2 188.7L612.2 197.7L613.4 197.7L613.4 188.8L614.6 188.8L614.6 196.2L616.4 196.2L616.4 197.8L617.6 197.8L617.6 196.1L619.1 196.1L619.1 200.1L619.9 200.1L619.9 190.3L621.4 190.3L621.4 190.5L622.2 190.5L622.2 199.9L623.7 199.9L623.7 193.9L624.7 193.9L624.7 192.4L625.5 192.4L625.5 191.4L627.7 191.4L627.7 192.1L628.5 192.1L628.5 196.6L629.5 196.6L629.5 188.7L631.7 188.7L631.7 194.5L633.9 194.5L633.9 191.6L634.7 191.6L634.7 195.8L636.2 195.8L636.2 191.7L637.0 191.7L637.0 195.3L638.2 195.3L638.2 198.7L639.2 198.7L639.2 188.7L640.7 188.7L640.7 189.8L641.5 189.8L641.5 199.3L642.3 199.3L642.3 191.2L643.5 191.2L643.5 194.9L645.0 194.9L645.0 190.1L645.8 190.1L645.8 191.5L647.6 191.5L647.6 194.3L648.6 194.3L648.6 189.5L649.8 189.5L649.8 195.9L650.8 195.9L650.8 192.2L651.6 192.2L651.6 189.2L653.1 189.2L653.1 195.9L654.6 195.9L654.6 188.8L656.1 188.8L656.1 198.1L656.9 198.1L656.9 198.2L657.9 198.2L657.9 195.4L659.1 195.4L659.1 195.0L660.3 195.0L660.3 189.0L661.1 189.0L661.1 197.3L661.9 197.3L661.9 191.6L663.4 191.6L663.4 199.9L664.9 199.9L664.9 191.4L665.9 191.4L665.9 197.7L667.1 197.7L667.1 196.0L668.1 196.0L668.1 197.1L668.9 197.1L668.9 191.7L669.7 191.7L669.7 200.1L670.9 200.1L670.9 189.9L672.7 189.9L672.7 199.4L673.9 199.4L673.9 191.4L675.7 191.4L675.7 191.1L676.5 191.1L676.5 195.4L678.0 195.4L678.0 194.5L679.5 194.5L679.5 195.5L680.3 195.5L680.3 199.9L681.3 199.9L681.3 189.9L682.5 189.9L682.5 199.1L684.3 199.1L684.3 191.5L685.3 191.5L685.3 195.4L687.1 195.4L687.1 192.4L687.9 192.4L687.9 189.6L688.7 189.6L688.7 197.5L690.2 197.5L690.2 189.1L691.7 189.1L691.7 191.2L693.9 191.2L693.9 199.7L695.1 199.7L695.1 190.8L696.3 190.8L696.3 195.3L697.3 195.3L697.3 189.2L699.1 189.2L699.1 194.5L700.1 194.5L700.1 189.5L700.9 189.5L700.9 192.5L701.7 192.5L701.7 197.8L703.2 197.8L703.2 194.7L704.0 194.7L704.0 190.9L705.8 190.9L705.8 195.6L706.8 195.6L706.8 189.6L709.0 189.6L709.0 189.0L710.8 189.0L710.8 190.0L711.6 190.0L711.6 194.3L712.8 194.3L712.8 191.5L713.8 191.5L713.8 191.8L715.3 191.8L715.3 189.3L716.5 189.3L716.5 195.5L718.0 195.5L718.0 189.0L719.5 189.0L719.5 189.2L721.3 189.2L721.3 196.3L722.8 196.3L722.8 195.2L723.6 195.2L723.6 190.8L724.8 190.8L724.8 196.6L726.0 196.6L726.0 195.1L726.8 195.1L726.8 189.2L727.6 189.2L727.6 190.2L728.8 190.2L728.8 193.6L730.6 193.6L730.6 191.7L732.1 191.7L732.1 195.0L733.9 195.0L733.9 190.0L734.9 190.0L734.9 197.4L736.4 197.4L736.4 199.8L737.6 199.8L737.6 192.3L739.1 192.3L739.1 196.0L739.9 196.0L739.9 196.8L740.9 196.8L740.9 199.2L742.7 199.2L742.7 197.6L743.7 197.6L743.7 192.3L744.7 192.3L744.7 194.5L746.9 194.5L746.9 197.0L749.1 197.0L749.1 191.9L749.9 191.9L749.9 196.9L751.1 196.9L751.1 194.5L752.6 194.5L752.6 195.3L753.4 195.3L753.4 192.4L754.9 192.4L754.9 199.7L756.4 199.7L756.4 198.4L757.2 198.4L757.2 190.3L758.0 190.3L758.0 190.6L760.2 190.6L760.2 193.8L762.4 193.8L762.4 191.4L763.2 191.4L763.2 195.0L764.2 195.0L764.2 188.9L766.0 188.9L766.0 191.8L767.0 191.8L767.0 198.0L768.0 198.0L768.0 197.8L769.2 197.8L769.2 189.6L770.4 189.6L770.4 189.7L771.9 189.7L771.9 197.2L772.9 197.2L772.9 191.0L773.9 191.0L773.9 194.2L774.9 194.2L774.9 194.8L776.4 194.8L776.4 191.7L777.2 191.7L777.2 188.8L778.4 188.8L778.4 190.4L780.2 190.4L780.2 197.4L782.0 197.4L782.0 196.7L783.2 196.7L783.2 190.0L784.2 190.0L784.2 198.5L785.2 198.5L785.2 192.3L786.4 192.3L786.4 189.6L788.6 189.6L788.6 192.0L790.8 192.0L790.8 191.5L793.0 191.5L793.0 196.0L794.5 196.0L794.5 190.0L795.3 190.0L795.3 196.1L796.1 196.1L796.1 190.8L797.3 190.8L797.3 194.4L799.1 194.4L799.1 189.1L800.3 189.1L800.3 190.5L801.3 190.5L801.3 199.5L802.8 199.5L802.8 191.1L805.0 191.1L805.0 190.2L806.2 190.2L806.2 188.8L808.0 188.8L808.0 190.9L809.8 190.9L809.8 199.6L810.8 199.6L810.8 188.6L811.6 188.6L811.6 194.5L812.4 194.5L812.4 196.0L814.6 196.0L814.6 194.3L816.4 194.3L816.4 195.2L818.2 195.2L818.2 189.8L819.4 189.8L819.4 192.5L821.6 192.5L821.6 191.4L822.4 191.4L822.4 197.1L823.2 197.1L823.2 194.4L824.0 194.4L824.0 191.1L824.8 191.1L824.8 199.4L826.0 199.4L826.0 195.7L827.5 195.7L827.5 200.4L828.7 200.4L828.7 197.8L830.5 197.8L830.5 189.6L831.5 189.6L831.5 189.4L832.5 189.4L832.5 189.9L834.0 189.9L834.0 197.1L836.2 197.1L836.2 199.9L838.0 199.9L838.0 191.9L840.2 191.9L840.2 197.3L841.2 197.3L841.2 189.8L842.2 189.8L842.2 195.8L843.2 195.8L843.2 188.7L844.0 188.7L844.0 189.2L845.0 189.2L845.0 188.7L846.0 188.7L846.0 191.1L848.2 191.1L848.2 196.9L849.4 196.9L849.4 192.3L851.2 192.3L851.2 188.9L853.4 188.9L853.4 189.0L854.4 189.0L854.4 197.3L856.6 197.3L856.6 191.5L858.8 191.5L858.8 193.9L861.0 193.9L861.0 189.8L862.5 189.8L862.5 197.2L863.3 197.2L863.3 194.8L865.1 194.8L865.1 191.9L866.9 191.9L866.9 191.7L867.7 191.7L867.7 198.2L869.9 198.2L869.9 190.8L872.1 190.8L872.1 189.0L873.3 189.0L873.3 194.3L874.1 194.3L874.1 190.5L875.6 190.5L875.6 191.8L877.1 191.8L877.1 198.8L878.9 198.8L878.9 194.4L881.1 194.4L881.1 189.2L883.3 189.2L883.3 190.5L885.5 190.5L885.5 194.8L886.3 194.8L886.3 190.1L888.5 190.1L888.5 197.1L889.5 197.1L889.5 190.3L891.3 190.3L891.3 197.0L892.3 197.0L892.3 195.9L894.5 195.9L894.5 194.9L895.7 194.9L895.7 192.0L897.2 192.0L897.2 191.5L898.2 191.5L898.2 194.5L899.2 194.5L899.2 190.4L901.4 190.4L901.4 194.7L903.6 194.7L903.6 196.4L904.6 196.4L904.6 194.9L905.6 194.9L905.6 189.3L907.8 189.3L907.8 189.2L910.0 189.2L910.0 197.4L911.2 197.4L911.2 194.3L913.4 194.3L913.4 197.0L914.9 197.0L914.9 190.2L916.4 190.2L916.4 190.6L918.6 190.6L918.6 194.5L920.8 194.5L920.8 191.5L922.3 191.5L922.3 190.9L924.5 190.9L924.5 196.4L926.7 196.4L926.7 199.4L928.9 199.4L928.9 190.3L930.1 190.3L930.1 189.0L931.6 189.0L931.6 196.4L932.6 196.4L932.6 190.3L934.1 190.3L934.1 198.8L936.3 198.8L936.3 196.1L937.1 196.1L937.1 190.5L937.9 190.5L937.9 194.1L938.9 194.1L938.9 189.0L940.7 189.0L940.7 195.4L941.5 195.4L941.5 198.8L943.0 198.8L943.0 197.5L944.0 197.5L944.0 191.6L944.8 191.6L944.8 191.0L947.0 191.0L947.0 195.1L947.8 195.1L947.8 192.2L950.0 192.2L950.0 190.0L951.2 190.0L951.2 195.1L953.0 195.1L953.0 200.4L954.5 200.4L954.5 189.1L955.3 189.1L955.3 191.1L956.8 191.1L956.8 191.4L957.8 191.4L957.8 196.8L959.3 196.8L959.3 189.7L961.1 189.7L961.1 191.6L962.6 191.6L962.6 197.9L964.1 197.9L964.1 199.4L965.6 199.4L965.6 191.4L966.8 191.4L966.8 194.8L968.3 194.8L968.3 191.1L970.5 191.1L970.5 189.2L971.7 189.2L971.7 188.8L973.5 188.8L973.5 191.7L974.5 191.7L974.5 195.8L976.7 195.8L976.7 192.3L978.9 192.3L978.9 195.8L979.9 195.8L979.9 190.4L980.9 190.4L980.9 195.6L982.7 195.6L982.7 196.6L984.9 196.6L984.9 196.0L986.1 196.0L986.1 191.3L987.9 191.3L987.9 199.3L988.7 199.3L988.7 189.6L989.7 189.6L989.7 190.4L991.5 190.4L991.5 194.1L993.0 194.1L993.0 189.2L994.8 189.2L994.8 188.6L996.0 188.6L996.0 196.2L997.5 196.2L997.5 190.2L999.7 190.2L999.7 196.0L1000.5 196.0L1000.5 188.8L1002.7 188.8L1002.7 189.9L1003.5 189.9L1003.5 197.1L1004.3 197.1L1004.3 190.2L1005.3 190.2L1005.3 198.3L1006.8 198.3L1006.8 197.1L1008.0 197.1L1008.0 190.2L1009.8 190.2L1009.8 194.9L1011.3 194.9L1011.3 190.6L1012.5 190.6L1012.5 189.9L1013.5 189.9L1013.5 191.7L1014.7 191.7L1014.7 197.4L1016.9 197.4L1016.9 192.5L1018.4 192.5L1018.4 192.1L1020.2 192.1L1020.2 193.9L1021.0 193.9L1021.0 192.2L1022.8 192.2L1022.8 188.8L1024.6 188.8L1024.6 191.0L1026.4 191.0L1026.4 196.3L1028.6 196.3L1028.6 188.8L1030.8 188.8L1030.8 197.4L1031.8 197.4L1031.8 193.9L1034.0 193.9L1034.0 192.0L1035.0 192.0L1035.0 190.8L1036.2 190.8L1036.2 189.3L1037.0 189.3L1037.0 196.1L1037.8 196.1L1037.8 190.6L1038.6 190.6L1038.6 190.2L1040.8 190.2L1040.8 190.3L1041.6 190.3L1041.6 190.9L1043.8 190.9L1043.8 190.5L1045.3 190.5L1045.3 195.4L1046.3 195.4L1046.3 193.5L1048.5 193.5L1048.5 192.4L1049.3 192.4L1049.3 195.4L1050.5 195.4L1050.5 196.4L1051.5 196.4L1051.5 196.5L1053.7 196.5L1053.7 197.3L1055.9 197.3L1055.9 190.5L1058.1 190.5L1058.1 189.6L1058.9 189.6L1058.9 188.6L1059.7 188.6L1059.7 191.3L1061.5 191.3L1061.5 196.4L1062.5 196.4L1062.5 199.1L1063.7 199.1L1063.7 190.8L1065.2 190.8L1065.2 197.4L1066.0 197.4L1066.0 191.1L1068.2 191.1L1068.2 190.5L1069.7 190.5L1069.7 191.7L1071.5 191.7L1071.5 196.0L1073.7 196.0L1073.7 198.2L1075.5 198.2L1075.5 194.1L1076.7 194.1L1076.7 192.4L1077.7 192.4L1077.7 195.9L1078.7 195.9L1078.7 193.5L1079.9 193.5L1079.9 189.2L1080.7 189.2L1080.7 197.1L1082.5 197.1L1082.5 192.4L1084.3 192.4L1084.3 192.2L1085.5 192.2L1085.5 195.4L1087.0 195.4L1087.0 191.5L1088.0 191.5L1088.0 195.1L1090.2 195.1L1090.2 189.6L1091.0 189.6L1091.0 190.4L1091.8 190.4L1091.8 193.8L1093.3 193.8L1093.3 192.1L1095.1 192.1L1095.1 194.3L1096.1 194.3L1096.1 189.3L1098.3 189.3L1098.3 194.9L1100.1 194.9L1100.1 197.2L1101.6 197.2L1101.6 189.0L1103.8 189.0L1103.8 194.8L1104.6 194.8L1104.6 190.6L1105.4 190.6L1105.4 197.0L1107.2 197.0L1107.2 190.8L1108.4 190.8L1108.4 189.7L1109.2 189.7L1109.2 191.6L1111.0 191.6L1111.0 189.6L1111.8 189.6L1111.8 198.3L1112.6 198.3L1112.6 190.8L1114.8 190.8L1114.8 200.2L1115.6 200.2L1115.6 197.2L1117.8 197.2L1117.8 195.8L1120.0 195.8L1120.0 192.2L1121.8 192.2L1121.8 194.1L1122.8 194.1L1122.8 193.7L1124.0 193.7L1124.0 195.7L1124.8 195.7L1124.8 196.6L1127.0 196.6L1127.0 198.7L1127.8 198.7L1127.8 191.5L1128.8 191.5L1128.8 189.8L1130.6 189.8L1130.6 195.4L1131.8 195.4L1131.8 189.1L1133.3 189.1L1133.3 196.7L1135.5 196.7L1135.5 197.2L1136.3 197.2L1136.3 191.8L1137.1 191.8L1137.1 192.0L1139.3 192.0L1139.3 193.9L1140.8 193.9L1140.8 195.3L1142.0 195.3L1142.0 189.5L1142.8 189.5L1142.8 189.2L1143.8 189.2L1143.8 189.3L1145.3 189.3L1145.3 197.0L1146.5 197.0L1146.5 189.6L1147.3 189.6L1147.3 198.2L1148.3 198.2L1148.3 189.0L1149.8 189.0L1149.8 189.0L1151.6 189.0L1151.6 199.3L1152.6 199.3L1152.6 191.9L1153.4 191.9L1153.4 195.0L1154.6 195.0L1154.6 197.3L1155.8 197.3L1155.8 189.2L1158.0 189.2L1158.0 189.2L1160.2 189.2L1160.2 198.2L1161.2 198.2L1161.2 191.7L1163.0 191.7L1163.0 193.7L1164.5 193.7L1164.5 190.8L1165.5 190.8L1165.5 190.6L1166.5 190.6L1166.5 189.4L1167.3 189.4L1167.3 192.1L1169.5 192.1L1169.5 194.3L1171.3 194.3L1171.3 194.3L1172.5 194.3L1172.5 188.9L1174.7 188.9L1174.7 200.2L1176.5 200.2L1176.5 196.9L1178.0 196.9L1178.0 190.2L1179.5 190.2L1179.5 194.5L1181.3 194.5L1181.3 194.2L1182.5 194.2L1182.5 191.9L1183.7 191.9L1183.7 195.6L1184.5 195.6L1184.5 189.6L1185.7 189.6L1185.7 192.0L1187.5 192.0L1187.5 188.8L1188.3 188.8L1188.3 190.5L1190.1 190.5L1190.1 197.5L1191.1 197.5L1191.1 194.2L1191.9 194.2L1191.9 190.8L1192.7 190.8L1192.7 199.6L1193.9 199.6L1193.9 190.9L1195.7 190.9L1195.7 195.3L1196.9 195.3L1196.9 197.2L1197.7 197.2L1197.7 190.9L1198.9 190.9L1198.9 197.0L1200.7 197.0L1200.7 192.0L1201.7 192.0L1201.7 190.4L1203.2 190.4L1203.2 200.3L1204.7 200.3L1204.7 195.9L1205.5 195.9L1205.5 192.3L1206.7 192.3L1206.7 194.8L1208.2 194.8L1208.2 197.4L1209.4 197.4L1209.4 197.2L1211.2 197.2L1211.2 191.3L1212.4 191.3L1212.4 196.0L1213.6 196.0L1213.6 189.3L1214.8 189.3L1214.8 193.6L1215.8 193.6L1215.8 190.1L1217.3 190.1L1217.3 191.8L1218.1 191.8L1218.1 194.6L1220.3 194.6L1220.3 196.7L1221.1 196.7L1221.1 195.6L1222.6 195.6L1222.6 188.8L1223.4 188.8L1223.4 194.0L1225.2 194.0L1225.2 200.2L1226.0 200.2L1226.0 190.7L1227.0 190.7L1227.0 197.0L1228.5 197.0L1228.5 189.7L1230.7 189.7L1230.7 196.9L1232.5 196.9L1232.5 195.0L1234.3 195.0L1234.3 195.7L1236.1 195.7L1236.1 191.8L1236.9 191.8L1236.9 195.5L1238.4 195.5L1238.4 197.2L1239.4 197.2L1239.4 195.7L1240.9 195.7L1240.9 192.0L1241.9 192.0L1241.9 197.6L1242.7 197.6L1242.7 190.0L1244.9 190.0L1244.9 195.3L1247.1 195.3L1247.1 197.5L1249.3 197.5L1249.3 194.8L1250.5 194.8L1250.5 189.4L1252.3 189.4L1252.3 191.8L1254.1 191.8L1254.1 200.2L1255.6 200.2L1255.6 191.1L1257.8 191.1L1257.8 189.1L1258.6 189.1L1258.6 199.1L1260.1 199.1L1260.1 192.5L1261.1 192.5L1261.1 200.1L1262.9 200.1L1262.9 191.9L1265.1 191.9L1265.1 198.0L1266.6 198.0L1266.6 190.9L1268.8 190.9L1268.8 200.0L1270.3 200.0L1270.3 189.8L1272.1 189.8L1272.1 195.8L1273.9 195.8L1273.9 191.8L1275.1 191.8L1275.1 199.9L1276.3 199.9L1276.3 190.3L1277.1 190.3L1277.1 197.1L1278.3 197.1L1278.3 198.9L1279.8 198.9L1279.8 190.6L1282.0 190.6L1282.0 193.7L1284.2 193.7L1284.2 192.3L1286.4 192.3L1286.4 195.1L1288.2 195.1L1288.2 190.8L1290.0 190.8L1290.0 195.2L1291.5 195.2L1291.5 191.0L1293.3 191.0L1293.3 196.8L1294.3 196.8L1294.3 190.0L1295.1 190.0L1295.1 190.6L1295.9 190.6L1295.9 189.8L1297.1 189.8L1297.1 192.5L1298.6 192.5L1298.6 190.6L1300.4 190.6L1300.4 198.4L1301.2 198.4L1301.2 194.9L1303.4 194.9L1303.4 195.1L1304.2 195.1L1304.2 191.3L1305.0 191.3L1305.0 190.2L1305.8 190.2L1305.8 194.3L1307.3 194.3L1307.3 197.0L1309.1 197.0L1309.1 189.2L1310.1 189.2L1310.1 194.1L1311.9 194.1L1311.9 189.0L1312.9 189.0L1312.9 190.5L1314.4 190.5L1314.4 197.2L1315.2 197.2L1315.2 194.1L1316.2 194.1L1316.2 189.3L1317.4 189.3L1317.4 192.0L1319.2 192.0L1319.2 196.0L1320.0 196.0L1320.0 192.1L1321.8 192.1L1321.8 188.8L1322.6 188.8L1322.6 189.6L1323.4 189.6L1323.4 194.2L1324.2 194.2L1324.2 198.1L1326.0 198.1L1326.0 192.1L1326.8 192.1L1326.8 196.4L1327.8 196.4L1327.8 190.2L1330.0 190.2L1330.0 197.9L1331.0 197.9L1331.0 190.1L1331.8 190.1L1331.8 189.7L1333.6 189.7L1333.6 197.0L1334.8 197.0L1334.8 188.9L1335.6 188.9L1335.6 198.9L1337.1 198.9L1337.1 189.7L1338.1 189.7L1338.1 193.6L1339.1 193.6L1339.1 189.1L1340.1 189.1L1340.1 197.4L1341.6 197.4L1341.6 191.7L1342.6 191.7L1342.6 196.4L1344.1 196.4L1344.1 194.7L1345.6 194.7L1345.6 189.5L1347.1 189.5L1347.1 192.3L1348.3 192.3L1348.3 197.5L1350.1 197.5L1350.1 191.0L1351.1 191.0L1351.1 199.4L1351.9 199.4L1351.9 189.7L1353.4 189.7L1353.4 197.5L1354.2 197.5L1354.2 188.9L1355.2 188.9L1355.2 189.5L1356.2 189.5L1356.2 189.0L1358.0 189.0L1358.0 191.7L1359.2 191.7L1359.2 197.3L1360.4 197.3L1360.4 191.4L1361.6 191.4L1361.6 198.6L1363.8 198.6L1363.8 197.5L1365.0 197.5L1365.0 190.0L1367.2 190.0L1367.2 192.1L1368.0 192.1L1368.0 191.3L1369.0 191.3L1369.0 190.2L1371.2 190.2L1371.2 194.6L1373.0 194.6L1373.0 197.1L1373.8 197.1L1373.8 190.3L1375.0 190.3L1375.0 198.9L1377.2 198.9L1377.2 196.9L1379.0 196.9L1379.0 190.6L1380.5 190.6L1380.5 190.8L1381.3 190.8L1381.3 199.3L1382.1 199.3L1382.1 196.3L1383.1 196.3L1383.1 194.8L1384.3 194.8L1384.3 196.3L1385.8 196.3L1385.8 194.4L1387.6 194.4L1387.6 192.3L1389.1 192.3L1389.1 195.5L1391.3 195.5L1391.3 195.3L1392.1 195.3L1392.1 196.2L1393.1 196.2L1393.1 189.3L1395.3 189.3L1395.3 190.8L1396.3 190.8L1396.3 199.2L1398.1 199.2L1398.1 192.4L1399.1 192.4L1399.1 194.3L1400.3 194.3L1400.3 191.3L1401.8 191.3L1401.8 189.5L1402.8 189.5L1402.8 194.0L1405.0 194.0L1405.0 189.8L1407.2 189.8L1407.2 194.8L1408.0 194.8L1408.0 191.6L1409.0 191.6L1409.0 189.2L1410.0 189.2L1410.0 204.5L1418.5 204.5L1418.500 211" fill="none" stroke="#70c95f" stroke-width="2.300"/><path d="M322.5 243.600L328.0 214.5L332.0 214.9L336.0 215.1L340.0 214.9L344.0 214.9L348.0 214.8L352.0 215.0L356.0 215.3L360.0 214.9L364.0 214.4L368.0 214.8L372.0 214.7L376.0 214.9L380.0 214.5L384.0 214.4L388.0 214.6L392.0 214.4L396.0 214.8L400.0 215.2L404.0 214.7L408.0 214.3L412.0 214.3L416.0 214.7L420.0 214.6L424.0 214.3L428.0 214.3L432.0 214.1L436.0 214.1L440.0 214.1L444.0 214.1L448.0 214.1L452.0 214.1L456.0 214.1L460.0 214.1L464.0 214.1L468.0 214.1L472.0 214.4L476.0 214.5L480.0 214.6L484.0 214.3L488.0 214.8L492.0 215.1L496.0 214.8L500.0 214.6L504.0 214.8L508.0 215.0L512.0 215.4L516.0 215.4L520.0 215.7L524.0 215.7L528.0 215.5L532.0 215.6L536.0 215.7L540.0 215.7L544.0 215.7L548.0 215.7L552.0 215.3L556.0 215.0L560.0 215.3L564.0 215.2L568.0 214.9L572.0 214.9L576.0 215.1L580.0 215.3L584.0 215.2L588.0 215.1L592.0 215.1L596.0 215.4L600.0 215.4L604.0 215.3L608.0 215.3L612.0 214.9L616.0 214.4L620.0 214.6L624.0 215.1L628.0 215.2L632.0 215.1L636.0 214.7L640.0 214.8L644.0 215.2L648.0 215.5L652.0 215.5L656.0 215.7L660.0 215.4L664.0 215.5L668.0 215.7L672.0 215.7L676.0 215.7L680.0 215.4L684.0 215.5L688.0 215.7L692.0 215.2L696.0 215.5L700.0 215.7L704.0 215.7L708.0 215.7L712.0 215.7L716.0 215.7L720.0 215.7L724.0 215.6L728.0 215.2L732.0 215.6L736.0 215.6L740.0 215.3L744.0 215.3L748.0 215.3L752.0 215.2L756.0 215.0L760.0 215.1L764.0 215.2L768.0 215.3L772.0 215.3L776.0 214.8L780.0 214.6L784.0 214.2L788.0 214.3L792.0 214.7L796.0 215.0L800.0 215.2L804.0 215.5L808.0 215.3L812.0 215.6L816.0 215.7L820.0 215.3L824.0 214.8L828.0 214.4L832.0 214.6L836.0 214.4L840.0 214.1L844.0 214.2L848.0 214.1L852.0 214.1L856.0 214.1L860.0 214.1L864.0 214.1L868.0 214.1L872.0 214.3L876.0 214.3L880.0 214.1L884.0 214.1L888.0 214.1L892.0 214.1L896.0 214.1L900.0 214.1L904.0 214.1L908.0 214.5L912.0 214.5L916.0 214.2L920.0 214.3L924.0 214.6L928.0 214.2L932.0 214.1L936.0 214.1L940.0 214.3L944.0 214.1L948.0 214.3L952.0 214.5L956.0 214.5L960.0 214.2L964.0 214.7L968.0 215.0L972.0 215.0L976.0 214.7L980.0 214.9L984.0 214.8L988.0 214.8L992.0 214.7L996.0 214.8L1000.0 214.4L1004.0 214.2L1008.0 214.6L1012.0 215.0L1016.0 214.8L1020.0 215.2L1024.0 215.0L1028.0 215.4L1032.0 215.6L1036.0 215.5L1040.0 215.3L1044.0 214.8L1048.0 215.2L1052.0 214.8L1056.0 215.1L1060.0 215.5L1064.0 215.6L1068.0 215.3L1072.0 215.6L1076.0 215.7L1080.0 215.7L1084.0 215.7L1088.0 215.6L1092.0 215.4L1096.0 215.2L1100.0 215.3L1104.0 215.3L1108.0 215.0L1112.0 214.6L1116.0 214.7L1120.0 214.5L1124.0 214.5L1128.0 214.4L1132.0 214.7L1136.0 215.1L1140.0 214.7L1144.0 214.4L1148.0 214.2L1152.0 214.7L1156.0 214.9L1160.0 214.8L1164.0 214.5L1168.0 214.7L1172.0 215.0L1176.0 215.4L1180.0 215.3L1184.0 215.6L1188.0 215.7L1192.0 215.7L1196.0 215.7L1200.0 215.4L1204.0 215.7L1208.0 215.3L1212.0 214.9L1216.0 215.3L1220.0 215.1L1224.0 215.3L1228.0 215.4L1232.0 215.7L1236.0 215.6L1240.0 215.4L1244.0 215.2L1248.0 215.6L1252.0 215.7L1256.0 215.7L1260.0 215.7L1264.0 215.3L1268.0 215.4L1272.0 215.0L1276.0 214.6L1280.0 214.2L1284.0 214.5L1288.0 214.8L1292.0 215.1L1296.0 215.0L1300.0 215.1L1304.0 215.3L1308.0 215.2L1312.0 215.3L1316.0 215.0L1320.0 214.6L1324.0 214.4L1328.0 214.8L1332.0 214.8L1336.0 215.2L1340.0 215.2L1344.0 215.0L1348.0 215.3L1352.0 215.6L1356.0 215.1L1360.0 215.3L1364.0 214.9L1368.0 214.5L1372.0 214.9L1376.0 214.4L1380.0 214.2L1384.0 214.7L1388.0 214.6L1392.0 214.2L1396.0 214.1L1400.0 214.1L1404.0 214.3L1408.0 214.1L1412.0 214.5L1416.0 214.4L1417 214.4 L1424 243.600Z" fill="#cbcbcb"/><path d="M323.5 243.600L328.0 219.7L331.0 220.3L334.0 219.6L337.0 219.0L340.0 219.5L343.0 219.9L346.0 220.1L349.0 219.8L352.0 220.0L355.0 220.1L358.0 220.3L361.0 219.7L364.0 219.6L367.0 219.5L370.0 219.8L373.0 220.3L376.0 220.3L379.0 220.3L382.0 220.2L385.0 219.9L388.0 219.1L391.0 218.4L394.0 218.3L397.0 218.1L400.0 217.9L403.0 218.5L406.0 218.5L409.0 218.6L412.0 218.2L415.0 217.7L418.0 217.7L421.0 217.7L424.0 217.7L427.0 218.5L430.0 218.8L433.0 218.3L436.0 218.9L439.0 219.3L442.0 219.7L445.0 220.3L448.0 220.3L451.0 220.3L454.0 220.1L457.0 220.3L460.0 220.3L463.0 219.8L466.0 220.2L469.0 220.3L472.0 220.2L475.0 220.3L478.0 220.3L481.0 220.3L484.0 220.3L487.0 220.3L490.0 220.1L493.0 220.3L496.0 220.3L499.0 220.2L502.0 220.3L505.0 220.3L508.0 220.3L511.0 220.3L514.0 219.8L517.0 219.6L520.0 219.9L523.0 219.4L526.0 220.0L529.0 219.6L532.0 220.3L535.0 220.0L538.0 220.3L541.0 220.3L544.0 220.3L547.0 220.3L550.0 220.3L553.0 220.3L556.0 220.0L559.0 219.6L562.0 219.6L565.0 220.2L568.0 220.3L571.0 219.6L574.0 220.1L577.0 220.3L580.0 220.3L583.0 219.8L586.0 220.2L589.0 219.5L592.0 219.8L595.0 219.4L598.0 219.0L601.0 219.6L604.0 218.9L607.0 219.0L610.0 219.5L613.0 219.1L616.0 218.7L619.0 219.3L622.0 219.2L625.0 219.5L628.0 218.8L631.0 218.5L634.0 218.0L637.0 218.3L640.0 217.7L643.0 218.4L646.0 217.7L649.0 218.1L652.0 217.7L655.0 217.7L658.0 218.2L661.0 217.7L664.0 217.7L667.0 218.0L670.0 217.8L673.0 217.7L676.0 218.5L679.0 217.9L682.0 217.7L685.0 217.7L688.0 217.9L691.0 218.3L694.0 217.7L697.0 217.7L700.0 217.7L703.0 217.7L706.0 218.1L709.0 218.5L712.0 219.1L715.0 219.5L718.0 220.1L721.0 220.3L724.0 220.3L727.0 219.8L730.0 220.1L733.0 219.8L736.0 219.2L739.0 219.1L742.0 219.7L745.0 219.1L748.0 219.2L751.0 219.1L754.0 219.1L757.0 218.5L760.0 219.2L763.0 218.9L766.0 219.0L769.0 218.9L772.0 218.2L775.0 218.2L778.0 217.7L781.0 217.7L784.0 217.7L787.0 217.7L790.0 217.7L793.0 217.9L796.0 217.9L799.0 218.7L802.0 219.4L805.0 220.1L808.0 219.7L811.0 219.6L814.0 219.2L817.0 219.4L820.0 219.6L823.0 220.0L826.0 220.3L829.0 219.9L832.0 219.8L835.0 219.8L838.0 219.1L841.0 218.3L844.0 218.2L847.0 217.7L850.0 218.0L853.0 217.7L856.0 217.7L859.0 217.7L862.0 217.7L865.0 217.7L868.0 217.7L871.0 217.7L874.0 217.7L877.0 217.9L880.0 217.7L883.0 218.3L886.0 219.1L889.0 219.4L892.0 219.3L895.0 219.3L898.0 219.5L901.0 218.8L904.0 218.6L907.0 218.7L910.0 218.2L913.0 217.7L916.0 218.2L919.0 218.0L922.0 218.0L925.0 218.7L928.0 218.8L931.0 218.5L934.0 219.2L937.0 219.0L940.0 218.3L943.0 218.6L946.0 218.0L949.0 217.7L952.0 218.2L955.0 218.5L958.0 217.7L961.0 217.7L964.0 217.7L967.0 217.7L970.0 217.7L973.0 217.8L976.0 217.7L979.0 217.7L982.0 217.7L985.0 218.4L988.0 217.7L991.0 218.1L994.0 217.7L997.0 217.8L1000.0 217.7L1003.0 217.7L1006.0 218.1L1009.0 217.9L1012.0 217.7L1015.0 217.7L1018.0 217.7L1021.0 218.2L1024.0 218.5L1027.0 219.2L1030.0 219.5L1033.0 218.7L1036.0 219.0L1039.0 219.4L1042.0 219.8L1045.0 219.8L1048.0 219.5L1051.0 219.5L1054.0 219.9L1057.0 219.6L1060.0 219.6L1063.0 219.6L1066.0 220.3L1069.0 220.3L1072.0 220.3L1075.0 220.3L1078.0 220.0L1081.0 219.6L1084.0 219.5L1087.0 219.2L1090.0 219.1L1093.0 219.3L1096.0 220.0L1099.0 220.1L1102.0 220.3L1105.0 219.7L1108.0 219.4L1111.0 220.2L1114.0 219.7L1117.0 219.5L1120.0 218.9L1123.0 218.2L1126.0 218.8L1129.0 219.6L1132.0 219.8L1135.0 219.2L1138.0 218.9L1141.0 218.5L1144.0 218.8L1147.0 219.1L1150.0 219.0L1153.0 219.0L1156.0 218.4L1159.0 218.5L1162.0 219.2L1165.0 219.6L1168.0 218.9L1171.0 219.0L1174.0 219.3L1177.0 218.9L1180.0 219.5L1183.0 219.5L1186.0 219.8L1189.0 219.6L1192.0 220.3L1195.0 220.3L1198.0 220.3L1201.0 219.7L1204.0 219.7L1207.0 218.9L1210.0 219.1L1213.0 219.7L1216.0 219.2L1219.0 219.2L1222.0 219.2L1225.0 219.0L1228.0 219.3L1231.0 220.0L1234.0 220.3L1237.0 220.3L1240.0 220.3L1243.0 220.0L1246.0 220.3L1249.0 220.3L1252.0 220.3L1255.0 220.3L1258.0 219.9L1261.0 220.1L1264.0 219.9L1267.0 220.2L1270.0 220.3L1273.0 220.3L1276.0 219.5L1279.0 219.5L1282.0 219.8L1285.0 220.3L1288.0 220.3L1291.0 220.3L1294.0 219.5L1297.0 220.2L1300.0 220.3L1303.0 220.3L1306.0 220.3L1309.0 220.3L1312.0 219.7L1315.0 220.2L1318.0 220.3L1321.0 219.8L1324.0 220.2L1327.0 220.3L1330.0 219.8L1333.0 220.3L1336.0 219.7L1339.0 219.9L1342.0 219.8L1345.0 219.4L1348.0 219.5L1351.0 219.5L1354.0 219.0L1357.0 219.7L1360.0 219.1L1363.0 218.3L1366.0 218.3L1369.0 218.8L1372.0 219.0L1375.0 219.4L1378.0 219.4L1381.0 219.7L1384.0 219.4L1387.0 219.1L1390.0 219.1L1393.0 218.3L1396.0 217.7L1399.0 218.1L1402.0 217.7L1405.0 218.1L1408.0 218.5L1411.0 218.4L1414.0 218.7L1417 218.7 L1424 243.600Z" fill="#f0c354"/><path d="M326 243.600L328.0 236.8L332.0 236.9L336.0 236.7L340.0 236.9L344.0 237.1L348.0 236.3L352.0 235.8L356.0 236.4L360.0 236.0L364.0 235.8L368.0 236.7L372.0 236.6L376.0 237.2L380.0 237.2L384.0 237.5L388.0 236.8L392.0 237.1L396.0 237.7L400.0 237.8L404.0 238.2L408.0 238.5L412.0 237.7L416.0 238.2L420.0 238.4L424.0 238.0L428.0 237.2L432.0 237.8L436.0 237.8L440.0 238.2L444.0 238.8L448.0 238.8L452.0 238.8L456.0 238.6L460.0 238.8L464.0 238.7L468.0 238.8L472.0 238.8L476.0 238.1L480.0 237.4L484.0 236.9L488.0 237.7L492.0 237.6L496.0 237.9L500.0 237.5L504.0 237.5L508.0 237.3L512.0 237.0L516.0 237.2L520.0 237.3L524.0 238.1L528.0 238.4L532.0 238.8L536.0 238.8L540.0 238.8L544.0 238.8L548.0 238.2L552.0 238.8L556.0 238.8L560.0 238.8L564.0 238.8L568.0 238.8L572.0 238.3L576.0 238.8L580.0 238.8L584.0 238.4L588.0 237.6L592.0 238.3L596.0 238.8L600.0 238.1L604.0 238.6L608.0 238.4L612.0 237.8L616.0 237.4L620.0 237.9L624.0 238.6L628.0 237.8L632.0 238.0L636.0 237.2L640.0 237.6L644.0 237.2L648.0 237.9L652.0 238.8L656.0 238.8L660.0 238.8L664.0 238.5L668.0 237.7L672.0 237.9L676.0 237.0L680.0 236.5L684.0 236.3L688.0 236.5L692.0 235.9L696.0 235.8L700.0 236.5L704.0 236.1L708.0 237.0L712.0 237.7L716.0 237.4L720.0 237.4L724.0 237.4L728.0 237.7L732.0 237.8L736.0 237.9L740.0 238.2L744.0 238.8L748.0 238.8L752.0 238.7L756.0 238.8L760.0 238.3L764.0 238.0L768.0 238.8L772.0 238.8L776.0 238.8L780.0 237.9L784.0 237.8L788.0 237.9L792.0 237.0L796.0 237.3L800.0 237.5L804.0 236.7L808.0 236.9L812.0 236.9L816.0 237.2L820.0 236.9L824.0 237.3L828.0 237.7L832.0 236.9L836.0 236.1L840.0 236.4L844.0 237.2L848.0 236.8L852.0 236.7L856.0 236.9L860.0 236.5L864.0 236.3L868.0 236.0L872.0 235.8L876.0 236.0L880.0 235.8L884.0 235.8L888.0 236.3L892.0 235.8L896.0 235.9L900.0 236.3L904.0 236.0L908.0 235.8L912.0 236.3L916.0 235.9L920.0 235.8L924.0 235.8L928.0 236.2L932.0 235.8L936.0 235.8L940.0 235.8L944.0 236.4L948.0 236.3L952.0 236.9L956.0 236.3L960.0 236.0L964.0 236.3L968.0 237.0L972.0 236.9L976.0 236.4L980.0 235.8L984.0 235.9L988.0 235.8L992.0 236.4L996.0 237.0L1000.0 236.4L1004.0 236.0L1008.0 236.5L1012.0 236.8L1016.0 237.4L1020.0 237.1L1024.0 236.4L1028.0 236.0L1032.0 236.6L1036.0 236.2L1040.0 235.9L1044.0 235.8L1048.0 235.8L1052.0 235.8L1056.0 236.6L1060.0 235.9L1064.0 235.8L1068.0 236.6L1072.0 237.3L1076.0 238.2L1080.0 238.0L1084.0 238.8L1088.0 238.8L1092.0 238.3L1096.0 238.7L1100.0 238.8L1104.0 238.8L1108.0 238.8L1112.0 238.4L1116.0 238.1L1120.0 237.6L1124.0 236.9L1128.0 237.0L1132.0 236.6L1136.0 237.2L1140.0 236.4L1144.0 237.1L1148.0 237.5L1152.0 238.2L1156.0 238.8L1160.0 238.8L1164.0 238.8L1168.0 237.9L1172.0 238.4L1176.0 237.8L1180.0 237.4L1184.0 237.7L1188.0 237.8L1192.0 237.6L1196.0 238.4L1200.0 238.6L1204.0 238.3L1208.0 237.9L1212.0 238.5L1216.0 238.5L1220.0 238.8L1224.0 238.5L1228.0 238.0L1232.0 238.1L1236.0 238.6L1240.0 238.0L1244.0 238.6L1248.0 238.8L1252.0 238.8L1256.0 238.8L1260.0 237.9L1264.0 238.1L1268.0 238.8L1272.0 238.0L1276.0 237.6L1280.0 237.2L1284.0 237.2L1288.0 237.1L1292.0 237.0L1296.0 237.5L1300.0 236.6L1304.0 235.8L1308.0 235.8L1312.0 235.8L1316.0 235.8L1320.0 236.7L1324.0 237.3L1328.0 236.5L1332.0 236.6L1336.0 236.2L1340.0 235.9L1344.0 235.8L1348.0 236.1L1352.0 236.2L1356.0 236.0L1360.0 235.8L1364.0 235.8L1368.0 235.8L1372.0 235.9L1376.0 236.3L1380.0 236.1L1384.0 235.8L1388.0 235.8L1392.0 235.8L1396.0 236.0L1400.0 236.5L1404.0 236.3L1408.0 236.8L1412.0 237.0L1416.0 236.9L1417 236.9 L1424 243.600Z" fill="#9a7fe6"/><path d="M327 243.600L328.0 239.8L332.0 239.4L336.0 239.4L340.0 239.3L344.0 239.3L348.0 239.3L352.0 239.7L356.0 239.9L360.0 240.1L364.0 239.9L368.0 239.9L372.0 239.7L376.0 239.5L380.0 239.3L384.0 239.3L388.0 239.7L392.0 239.9L396.0 240.2L400.0 240.4L404.0 240.2L408.0 240.0L412.0 240.1L416.0 240.3L420.0 240.6L424.0 240.7L428.0 240.4L432.0 240.4L436.0 240.6L440.0 240.6L444.0 240.3L448.0 240.3L452.0 240.0L456.0 240.3L460.0 240.6L464.0 240.7L468.0 240.5L472.0 240.7L476.0 240.7L480.0 240.7L484.0 240.7L488.0 240.7L492.0 240.6L496.0 240.7L500.0 240.6L504.0 240.4L508.0 240.2L512.0 240.5L516.0 240.1L520.0 239.7L524.0 239.8L528.0 239.6L532.0 239.6L536.0 239.6L540.0 239.5L544.0 239.9L548.0 239.6L552.0 239.6L556.0 239.3L560.0 239.4L564.0 239.3L568.0 239.3L572.0 239.5L576.0 239.4L580.0 239.4L584.0 239.7L588.0 239.4L592.0 239.3L596.0 239.3L600.0 239.5L604.0 239.6L608.0 239.4L612.0 239.3L616.0 239.3L620.0 239.3L624.0 239.3L628.0 239.5L632.0 239.8L636.0 240.2L640.0 240.4L644.0 240.7L648.0 240.3L652.0 240.1L656.0 240.5L660.0 240.7L664.0 240.6L668.0 240.7L672.0 240.7L676.0 240.7L680.0 240.5L684.0 240.3L688.0 240.2L692.0 239.9L696.0 239.8L700.0 240.2L704.0 240.1L708.0 239.6L712.0 239.3L716.0 239.3L720.0 239.5L724.0 239.4L728.0 239.3L732.0 239.3L736.0 239.7L740.0 239.6L744.0 239.4L748.0 239.3L752.0 239.3L756.0 239.3L760.0 239.4L764.0 239.3L768.0 239.3L772.0 239.3L776.0 239.3L780.0 239.7L784.0 239.4L788.0 239.4L792.0 239.7L796.0 239.6L800.0 240.0L804.0 240.0L808.0 239.8L812.0 239.7L816.0 239.3L820.0 239.3L824.0 239.3L828.0 239.6L832.0 239.9L836.0 239.9L840.0 239.5L844.0 239.3L848.0 239.3L852.0 239.3L856.0 239.3L860.0 239.6L864.0 239.3L868.0 239.3L872.0 239.7L876.0 239.7L880.0 240.1L884.0 240.0L888.0 240.4L892.0 240.5L896.0 240.7L900.0 240.7L904.0 240.7L908.0 240.4L912.0 240.1L916.0 240.4L920.0 240.7L924.0 240.7L928.0 240.6L932.0 240.7L936.0 240.7L940.0 240.7L944.0 240.7L948.0 240.7L952.0 240.7L956.0 240.7L960.0 240.5L964.0 240.7L968.0 240.7L972.0 240.3L976.0 240.7L980.0 240.7L984.0 240.7L988.0 240.3L992.0 240.7L996.0 240.3L1000.0 240.7L1004.0 240.7L1008.0 240.3L1012.0 240.1L1016.0 240.2L1020.0 240.2L1024.0 240.4L1028.0 240.7L1032.0 240.5L1036.0 240.0L1040.0 240.4L1044.0 240.0L1048.0 240.3L1052.0 240.0L1056.0 240.2L1060.0 240.5L1064.0 240.7L1068.0 240.7L1072.0 240.7L1076.0 240.4L1080.0 240.6L1084.0 240.5L1088.0 240.7L1092.0 240.7L1096.0 240.7L1100.0 240.7L1104.0 240.3L1108.0 239.9L1112.0 240.0L1116.0 240.0L1120.0 240.3L1124.0 240.4L1128.0 240.1L1132.0 240.0L1136.0 240.2L1140.0 240.2L1144.0 239.8L1148.0 240.1L1152.0 240.3L1156.0 240.0L1160.0 240.0L1164.0 239.9L1168.0 240.2L1172.0 240.0L1176.0 239.8L1180.0 239.8L1184.0 240.2L1188.0 239.8L1192.0 239.5L1196.0 239.6L1200.0 239.9L1204.0 239.9L1208.0 239.9L1212.0 240.2L1216.0 240.4L1220.0 240.1L1224.0 240.4L1228.0 240.1L1232.0 240.0L1236.0 240.2L1240.0 240.2L1244.0 240.4L1248.0 240.1L1252.0 240.5L1256.0 240.2L1260.0 239.9L1264.0 239.9L1268.0 239.8L1272.0 239.8L1276.0 240.1L1280.0 240.3L1284.0 239.9L1288.0 239.7L1292.0 239.8L1296.0 239.8L1300.0 239.9L1304.0 239.9L1308.0 239.6L1312.0 239.4L1316.0 239.7L1320.0 239.5L1324.0 239.8L1328.0 240.2L1332.0 240.3L1336.0 240.4L1340.0 240.5L1344.0 240.4L1348.0 240.7L1352.0 240.7L1356.0 240.7L1360.0 240.5L1364.0 240.7L1368.0 240.7L1372.0 240.7L1376.0 240.7L1380.0 240.3L1384.0 240.6L1388.0 240.5L1392.0 240.6L1396.0 240.3L1400.0 239.9L1404.0 239.6L1408.0 239.9L1412.0 239.6L1416.0 240.0L1417 240.0 L1422 243.600Z" fill="#69ad5f"/><defs><pattern id="hat" width="6" height="6" patternUnits="userSpaceOnUse" patternTransform="rotate(45)"><rect width="3" height="6" fill="#6bb25f"/><rect x="3" width="3" height="6" fill="#fff"/></pattern><clipPath id="hc"><path d="M1417 214H1450V243.600H1424L1417 229Z"/></clipPath></defs><rect x="1415" y="213" width="36" height="31" fill="url(#hat)" clip-path="url(#hc)"/><rect x="10" y="188.5" width="1.600" height="22" fill="#8fcf82"/><rect x="15" y="188.5" width="1.600" height="22" fill="#8fcf82"/><rect x="119.5" y="196" width="1.600" height="14.5" fill="#8fcf82"/><rect x="125.5" y="189" width="1.600" height="21.5" fill="#8fcf82"/><rect x="127.5" y="188" width="1.600" height="22.5" fill="#8fcf82"/><rect x="215.5" y="201" width="1.600" height="9.5" fill="#8fcf82"/><rect x="223.5" y="188.5" width="1.600" height="22" fill="#8fcf82"/><rect x="226.5" y="188.5" width="1.600" height="22" fill="#8fcf82"/><path d="M107 243.600C111 243 112.500 236 115 224C117 213 118.500 216 119.500 226C121 234 122 238 125 240C129 241.500 132 242.500 134 243.600Z" fill="#c9c9c9"/><path d="M209 243.600C211 240 212 233 214 233C216 233 217 238 219.500 240C221.500 238 223 223 225.500 223C228 223 229 238 231 243.600Z" fill="#c9c9c9"/><path d="M5 243.600C8 241.500 16 241.500 20 243.600Z" fill="#cfcfcf"/><rect x="116" y="238" width="4" height="5" fill="#b7a2ea"/><rect x="211" y="239" width="5" height="4" fill="#f0cf7c"/><rect x="224" y="241" width="5" height="2" fill="#b7a2ea"/><rect x="113" y="180" width="5.500" height="6" fill="#e57b78"/><rect x="325" y="180" width="5" height="6" fill="#e21d1d"/><rect x="1415.800" y="180.300" width="3.800" height="3.800" fill="#e21d1d"/><rect x="15" y="247.300" width="311.500" height="4.500" fill="#3f7fe0"/><rect x="1412" y="247" width="38" height="11" fill="#ebe8f6"/></svg><div class="a" style="left:2px;top:162px;width:268px;height:97px;background:rgba(200,200,200,0.48)"></div><div class="t" style="left:181.00px;top:163.00px;font-size:15px;color:#8a8a8a;letter-spacing:-0.289px;">5000 ms</div><div class="t" style="left:410.20px;top:163.00px;font-size:15px;color:#333;letter-spacing:-0.111px;">10000 ms</div><div class="t" style="left:648.60px;top:163.00px;font-size:15px;color:#333;letter-spacing:-0.111px;">15000 ms</div><div class="t" style="left:888.00px;top:163.00px;font-size:15px;color:#333;letter-spacing:-0.253px;">20000 ms</div><div class="t" style="left:1126.40px;top:163.00px;font-size:15px;color:#333;letter-spacing:-0.253px;">25000 ms</div><div class="t" style="left:1365.00px;top:163.00px;font-size:15px;color:#333;letter-spacing:-0.253px;">30000 ms</div><div class="a" style="left:1413px;top:185px;width:37px;height:15px;background:rgba(255,255,255,.75)"></div><div class="a" style="left:1409px;top:212px;width:41px;height:16px;background:rgba(255,255,255,.75)"></div><div class="a" style="left:1412px;top:246px;width:38px;height:13px;background:rgba(255,255,255,.6)"></div><div class="t" style="left:1417.80px;top:186.00px;font-size:13.5px;color:#555;letter-spacing:-0.475px;font-weight:bold;">FPS</div><div class="t" style="left:1415.20px;top:213.00px;font-size:13.5px;color:#555;letter-spacing:0.073px;font-weight:bold;">CPU</div><div class="t" style="left:1416.00px;top:246.00px;font-size:13.5px;color:#555;letter-spacing:-0.327px;font-weight:bold;">NET</div><div class="a" style="left:121px;top:161px;width:2px;height:98px;background:#555"></div><div class="a" style="left:216px;top:161px;width:1px;height:98px;background:#4a8fe0"></div><div class="a" style="left:330px;top:161px;width:1px;height:98px;background:#c62828"></div><div class="a" style="left:267px;top:161px;width:6.500px;height:27.500px;background:#fff"></div><div class="a" style="left:268px;top:161px;width:4.500px;height:26.500px;background:#8c8c8c"></div><div class="a" style="left:1447px;top:161px;width:3px;height:27px;background:#fff"></div><div class="a" style="left:1448px;top:161px;width:2px;height:26px;background:#8c8c8c"></div><div class="hl" style="top:259px;height:2px;background:#c9c9c9"></div><svg style="left:0;top:0" width="1450" height="968" viewBox="0 0 1450 968"><defs><pattern id="st0" x="1" width="3" height="8" patternUnits="userSpaceOnUse"><rect width="3" height="8" fill="#dcdcde"/><rect x="0" width="1" height="8" fill="#c3c3c3"/></pattern><pattern id="st1" x="1" width="3" height="8" patternUnits="userSpaceOnUse"><rect width="3" height="8" fill="#f9e3b2"/><rect x="0" width="1" height="8" fill="#eec050"/></pattern><pattern id="st2" x="1" width="3" height="8" patternUnits="userSpaceOnUse"><rect width="3" height="8" fill="#f9e3b2"/><rect x="0" width="1" height="8" fill="#eec050"/></pattern><pattern id="st3" x="1" width="3" height="8" patternUnits="userSpaceOnUse"><rect width="3" height="8" fill="#f6e1f4"/><rect x="0" width="1" height="8" fill="#ecbfe6"/></pattern><pattern id="st4" x="1" width="3" height="8" patternUnits="userSpaceOnUse"><rect width="3" height="8" fill="#f8ede6"/><rect x="0" width="1" height="8" fill="#f0d9c4"/></pattern><pattern id="st5" x="1" width="3" height="8" patternUnits="userSpaceOnUse"><rect width="3" height="8" fill="#f9e3b2"/><rect x="0" width="1" height="8" fill="#eec050"/></pattern></defs><rect x="4" y="435" width="63" height="136" fill="#f5f8fd"/><rect x="1387" y="435" width="47.500" height="136" fill="#f5f8fd"/><rect x="1391.500" y="537" width="1.500" height="34" fill="#cdeec8"/><rect x="0" y="312" width="1434" height="1" fill="#ededed"/><rect x="0" y="343" width="1434" height="1" fill="#ededed"/><rect x="0" y="375" width="1434" height="1" fill="#ededed"/><rect x="0" y="406" width="1434" height="1" fill="#ededed"/><rect x="1387" y="286.500" width="47" height="24" fill="#b4b4b4"/><rect x="1386.500" y="286.500" width="1" height="24" fill="#4a8fe0"/><rect x="0" y="298" width="7" height="1" fill="#bbb"/><rect x="0" y="315.600" width="1.500" height="24.600" fill="#d9f0d3"/><rect x="4" y="315.600" width="1.500" height="24.600" fill="#d9f0d3"/><rect x="8" y="315.600" width="1.500" height="24.600" fill="#d9f0d3"/><rect x="68" y="315.600" width="1" height="24.600" fill="#d9f0d3"/><rect x="73.5" y="315.600" width="1" height="24.600" fill="#d9f0d3"/><rect x="77" y="315.600" width="1" height="24.600" fill="#d9f0d3"/><rect x="81.5" y="315.600" width="1.5" height="24.600" fill="#d9f0d3"/><rect x="90.0" y="315.600" width="4" height="24.600" fill="#d7efd1"/><rect x="103.0" y="315.600" width="4" height="24.600" fill="#d7efd1"/><rect x="113.0" y="315.600" width="1.5" height="24.600" fill="#d7efd1"/><rect x="116.5" y="315.600" width="4" height="24.600" fill="#d7efd1"/><rect x="135.5" y="315.600" width="1.2" height="24.600" fill="#d7efd1"/><rect x="138.7" y="315.600" width="4" height="24.600" fill="#d7efd1"/><rect x="145.7" y="315.600" width="1.2" height="24.600" fill="#d7efd1"/><rect x="148.9" y="315.600" width="1" height="24.600" fill="#d7efd1"/><rect x="164.9" y="315.600" width="2.5" height="24.600" fill="#d7efd1"/><rect x="173.4" y="315.600" width="1.2" height="24.600" fill="#d7efd1"/><rect x="189.6" y="315.600" width="1" height="24.600" fill="#d7efd1"/><rect x="199.6" y="315.600" width="1" height="24.600" fill="#d7efd1"/><rect x="202.1" y="315.600" width="1" height="24.600" fill="#d7efd1"/><rect x="205.6" y="315.600" width="1.5" height="24.600" fill="#d7efd1"/><rect x="222.1" y="315.600" width="1" height="24.600" fill="#d7efd1"/><rect x="229.1" y="315.600" width="2" height="24.600" fill="#d7efd1"/><rect x="237.1" y="315.600" width="1.5" height="24.600" fill="#d7efd1"/><rect x="247.6" y="315.600" width="1.5" height="24.600" fill="#d7efd1"/><rect x="252.1" y="315.600" width="4" height="24.600" fill="#d7efd1"/><rect x="257.6" y="315.600" width="1" height="24.600" fill="#d7efd1"/><rect x="264.6" y="315.600" width="1.5" height="24.600" fill="#d7efd1"/><rect x="270.1" y="315.600" width="1" height="24.600" fill="#d7efd1"/><rect x="274.1" y="315.600" width="2" height="24.600" fill="#d7efd1"/><rect x="278.6" y="315.600" width="1.5" height="24.600" fill="#d7efd1"/><rect x="281.6" y="315.600" width="1" height="24.600" fill="#d7efd1"/><rect x="297.6" y="315.600" width="1" height="24.600" fill="#d7efd1"/><rect x="302.6" y="315.600" width="1" height="24.600" fill="#d7efd1"/><rect x="306.6" y="315.600" width="2.5" height="24.600" fill="#d7efd1"/><rect x="311.1" y="315.600" width="1" height="24.600" fill="#d7efd1"/><rect x="313.6" y="315.600" width="1.5" height="24.600" fill="#d7efd1"/><rect x="317.6" y="315.600" width="1" height="24.600" fill="#d7efd1"/><rect x="324.6" y="315.600" width="2.5" height="24.600" fill="#d7efd1"/><rect x="331.1" y="315.600" width="2.5" height="24.600" fill="#d7efd1"/><rect x="335.6" y="315.600" width="1.5" height="24.600" fill="#d7efd1"/><rect x="340.1" y="315.600" width="2" height="24.600" fill="#d7efd1"/><rect x="344.1" y="315.600" width="1.5" height="24.600" fill="#d7efd1"/><rect x="349.1" y="315.600" width="1" height="24.600" fill="#d7efd1"/><rect x="354.1" y="315.600" width="1" height="24.600" fill="#d7efd1"/><rect x="357.1" y="315.600" width="1.5" height="24.600" fill="#d7efd1"/><rect x="360.6" y="315.600" width="1" height="24.600" fill="#d7efd1"/><rect x="363.1" y="315.600" width="4" height="24.600" fill="#d7efd1"/><rect x="373.1" y="315.600" width="1.2" height="24.600" fill="#d7efd1"/><rect x="383.3" y="315.600" width="1.5" height="24.600" fill="#d7efd1"/><rect x="390.8" y="315.600" width="1.5" height="24.600" fill="#d7efd1"/><rect x="394.3" y="315.600" width="2.5" height="24.600" fill="#d7efd1"/><rect x="400.8" y="315.600" width="1" height="24.600" fill="#d7efd1"/><rect x="405.8" y="315.600" width="2.5" height="24.600" fill="#d7efd1"/><rect x="410.8" y="315.600" width="1" height="24.600" fill="#d7efd1"/><rect x="414.8" y="315.600" width="1.5" height="24.600" fill="#d7efd1"/><rect x="417.8" y="315.600" width="1.5" height="24.600" fill="#d7efd1"/><rect x="421.3" y="315.600" width="2.5" height="24.600" fill="#d7efd1"/><rect x="438.8" y="315.600" width="1" height="24.600" fill="#d7efd1"/><rect x="441.3" y="315.600" width="1.2" height="24.600" fill="#d7efd1"/><rect x="445.0" y="315.600" width="4" height="24.600" fill="#d7efd1"/><rect x="452.0" y="315.600" width="1" height="24.600" fill="#d7efd1"/><rect x="468.0" y="315.600" width="2" height="24.600" fill="#d7efd1"/><rect x="473.0" y="315.600" width="2.5" height="24.600" fill="#d7efd1"/><rect x="477.5" y="315.600" width="1" height="24.600" fill="#d7efd1"/><rect x="480.5" y="315.600" width="1.5" height="24.600" fill="#d7efd1"/><rect x="497.0" y="315.600" width="1.5" height="24.600" fill="#d7efd1"/><rect x="500.0" y="315.600" width="2" height="24.600" fill="#d7efd1"/><rect x="505.5" y="315.600" width="4" height="24.600" fill="#d7efd1"/><rect x="511.5" y="315.600" width="4" height="24.600" fill="#d7efd1"/><rect x="530.5" y="315.600" width="1.2" height="24.600" fill="#d7efd1"/><rect x="535.7" y="315.600" width="1.2" height="24.600" fill="#d7efd1"/><rect x="538.9" y="315.600" width="1.5" height="24.600" fill="#d7efd1"/><rect x="542.9" y="315.600" width="1.5" height="24.600" fill="#d7efd1"/><rect x="546.9" y="315.600" width="1.2" height="24.600" fill="#d7efd1"/><rect x="557.1" y="315.600" width="1.5" height="24.600" fill="#d7efd1"/><rect x="562.6" y="315.600" width="4" height="24.600" fill="#d7efd1"/><rect x="581.6" y="315.600" width="1" height="24.600" fill="#d7efd1"/><rect x="586.6" y="315.600" width="1" height="24.600" fill="#d7efd1"/><rect x="589.6" y="315.600" width="1" height="24.600" fill="#d7efd1"/><rect x="592.1" y="315.600" width="1.5" height="24.600" fill="#d7efd1"/><rect x="596.1" y="315.600" width="2.5" height="24.600" fill="#d7efd1"/><rect x="601.6" y="315.600" width="2.5" height="24.600" fill="#d7efd1"/><rect x="619.1" y="315.600" width="4" height="24.600" fill="#d7efd1"/><rect x="626.1" y="315.600" width="1.2" height="24.600" fill="#d7efd1"/><rect x="629.3" y="315.600" width="1.2" height="24.600" fill="#d7efd1"/><rect x="633.0" y="315.600" width="4" height="24.600" fill="#d7efd1"/><rect x="646.0" y="315.600" width="1" height="24.600" fill="#d7efd1"/><rect x="650.0" y="315.600" width="1.5" height="24.600" fill="#d7efd1"/><rect x="654.0" y="315.600" width="1" height="24.600" fill="#d7efd1"/><rect x="657.0" y="315.600" width="1.5" height="24.600" fill="#d7efd1"/><rect x="662.5" y="315.600" width="4" height="24.600" fill="#d7efd1"/><rect x="669.0" y="315.600" width="1" height="24.600" fill="#d7efd1"/><rect x="671.5" y="315.600" width="1.2" height="24.600" fill="#d7efd1"/><rect x="675.7" y="315.600" width="2" height="24.600" fill="#d7efd1"/><rect x="686.7" y="315.600" width="1.2" height="24.600" fill="#d7efd1"/><rect x="689.9" y="315.600" width="2" height="24.600" fill="#d7efd1"/><rect x="693.9" y="315.600" width="4" height="24.600" fill="#d7efd1"/><rect x="701.4" y="315.600" width="1.2" height="24.600" fill="#d7efd1"/><rect x="717.6" y="315.600" width="1" height="24.600" fill="#d7efd1"/><rect x="720.1" y="315.600" width="4" height="24.600" fill="#d7efd1"/><rect x="727.6" y="315.600" width="1.5" height="24.600" fill="#d7efd1"/><rect x="730.6" y="315.600" width="1" height="24.600" fill="#d7efd1"/><rect x="746.6" y="315.600" width="1" height="24.600" fill="#d7efd1"/><rect x="753.6" y="315.600" width="1" height="24.600" fill="#d7efd1"/><rect x="757.6" y="315.600" width="2" height="24.600" fill="#d7efd1"/><rect x="761.6" y="315.600" width="1" height="24.600" fill="#d7efd1"/><rect x="764.6" y="315.600" width="4" height="24.600" fill="#d7efd1"/><rect x="777.6" y="315.600" width="2" height="24.600" fill="#d7efd1"/><rect x="781.1" y="315.600" width="1.2" height="24.600" fill="#d7efd1"/><rect x="785.8" y="315.600" width="2" height="24.600" fill="#d7efd1"/><rect x="789.8" y="315.600" width="4" height="24.600" fill="#d7efd1"/><rect x="795.8" y="315.600" width="2.5" height="24.600" fill="#d7efd1"/><rect x="799.8" y="315.600" width="4" height="24.600" fill="#d7efd1"/><rect x="818.8" y="315.600" width="1" height="24.600" fill="#d7efd1"/><rect x="834.8" y="315.600" width="2.5" height="24.600" fill="#d7efd1"/><rect x="841.3" y="315.600" width="1" height="24.600" fill="#d7efd1"/><rect x="857.3" y="315.600" width="1" height="24.600" fill="#d7efd1"/><rect x="860.3" y="315.600" width="1" height="24.600" fill="#d7efd1"/><rect x="863.3" y="315.600" width="1.5" height="24.600" fill="#d7efd1"/><rect x="868.8" y="315.600" width="2" height="24.600" fill="#d7efd1"/><rect x="874.8" y="315.600" width="4" height="24.600" fill="#d7efd1"/><rect x="884.8" y="315.600" width="4" height="24.600" fill="#d7efd1"/><rect x="897.8" y="315.600" width="1" height="24.600" fill="#d7efd1"/><rect x="907.8" y="315.600" width="1" height="24.600" fill="#d7efd1"/><rect x="911.8" y="315.600" width="1" height="24.600" fill="#d7efd1"/><rect x="918.8" y="315.600" width="1" height="24.600" fill="#d7efd1"/><rect x="922.3" y="315.600" width="1" height="24.600" fill="#d7efd1"/><rect x="929.3" y="315.600" width="4" height="24.600" fill="#d7efd1"/><rect x="936.3" y="315.600" width="1" height="24.600" fill="#d7efd1"/><rect x="940.8" y="315.600" width="1.5" height="24.600" fill="#d7efd1"/><rect x="944.3" y="315.600" width="1.5" height="24.600" fill="#d7efd1"/><rect x="954.8" y="315.600" width="1.2" height="24.600" fill="#d7efd1"/><rect x="959.5" y="315.600" width="4" height="24.600" fill="#d7efd1"/><rect x="969.5" y="315.600" width="1.5" height="24.600" fill="#d7efd1"/><rect x="974.5" y="315.600" width="2.5" height="24.600" fill="#d7efd1"/><rect x="980.0" y="315.600" width="1.5" height="24.600" fill="#d7efd1"/><rect x="985.5" y="315.600" width="1.5" height="24.600" fill="#d7efd1"/><rect x="989.5" y="315.600" width="2.5" height="24.600" fill="#d7efd1"/><rect x="994.5" y="315.600" width="2" height="24.600" fill="#d7efd1"/><rect x="999.0" y="315.600" width="1.2" height="24.600" fill="#d7efd1"/><rect x="1002.2" y="315.600" width="4" height="24.600" fill="#d7efd1"/><rect x="1009.7" y="315.600" width="1" height="24.600" fill="#d7efd1"/><rect x="1012.7" y="315.600" width="1.5" height="24.600" fill="#d7efd1"/><rect x="1016.2" y="315.600" width="1" height="24.600" fill="#d7efd1"/><rect x="1023.2" y="315.600" width="4" height="24.600" fill="#d7efd1"/><rect x="1030.2" y="315.600" width="1.5" height="24.600" fill="#d7efd1"/><rect x="1035.7" y="315.600" width="2.5" height="24.600" fill="#d7efd1"/><rect x="1047.2" y="315.600" width="4" height="24.600" fill="#d7efd1"/><rect x="1054.7" y="315.600" width="4" height="24.600" fill="#d7efd1"/><rect x="1062.2" y="315.600" width="1" height="24.600" fill="#d7efd1"/><rect x="1064.7" y="315.600" width="1.5" height="24.600" fill="#d7efd1"/><rect x="1081.2" y="315.600" width="1" height="24.600" fill="#d7efd1"/><rect x="1085.2" y="315.600" width="2" height="24.600" fill="#d7efd1"/><rect x="1090.2" y="315.600" width="1" height="24.600" fill="#d7efd1"/><rect x="1093.2" y="315.600" width="2.5" height="24.600" fill="#d7efd1"/><rect x="1101.7" y="315.600" width="1.5" height="24.600" fill="#d7efd1"/><rect x="1104.7" y="315.600" width="1.5" height="24.600" fill="#d7efd1"/><rect x="1108.7" y="315.600" width="1.2" height="24.600" fill="#d7efd1"/><rect x="1111.4" y="315.600" width="1" height="24.600" fill="#d7efd1"/><rect x="1118.4" y="315.600" width="1" height="24.600" fill="#d7efd1"/><rect x="1128.4" y="315.600" width="2" height="24.600" fill="#d7efd1"/><rect x="1132.4" y="315.600" width="1.5" height="24.600" fill="#d7efd1"/><rect x="1136.4" y="315.600" width="4" height="24.600" fill="#d7efd1"/><rect x="1143.4" y="315.600" width="1.2" height="24.600" fill="#d7efd1"/><rect x="1146.1" y="315.600" width="4" height="24.600" fill="#d7efd1"/><rect x="1159.1" y="315.600" width="1" height="24.600" fill="#d7efd1"/><rect x="1162.1" y="315.600" width="1.5" height="24.600" fill="#d7efd1"/><rect x="1166.6" y="315.600" width="2" height="24.600" fill="#d7efd1"/><rect x="1177.6" y="315.600" width="1.2" height="24.600" fill="#d7efd1"/><rect x="1182.8" y="315.600" width="1.5" height="24.600" fill="#d7efd1"/><rect x="1186.3" y="315.600" width="2.5" height="24.600" fill="#d7efd1"/><rect x="1192.8" y="315.600" width="1.2" height="24.600" fill="#d7efd1"/><rect x="1200.0" y="315.600" width="4" height="24.600" fill="#d7efd1"/><rect x="1206.5" y="315.600" width="1" height="24.600" fill="#d7efd1"/><rect x="1211.5" y="315.600" width="2" height="24.600" fill="#d7efd1"/><rect x="1219.5" y="315.600" width="2" height="24.600" fill="#d7efd1"/><rect x="1224.0" y="315.600" width="1" height="24.600" fill="#d7efd1"/><rect x="1227.0" y="315.600" width="1.5" height="24.600" fill="#d7efd1"/><rect x="1231.0" y="315.600" width="2.5" height="24.600" fill="#d7efd1"/><rect x="1235.5" y="315.600" width="1.5" height="24.600" fill="#d7efd1"/><rect x="1246.0" y="315.600" width="2" height="24.600" fill="#d7efd1"/><rect x="1251.0" y="315.600" width="1" height="24.600" fill="#d7efd1"/><rect x="1255.5" y="315.600" width="1" height="24.600" fill="#d7efd1"/><rect x="1258.0" y="315.600" width="4" height="24.600" fill="#d7efd1"/><rect x="1265.5" y="315.600" width="2.5" height="24.600" fill="#d7efd1"/><rect x="1271.0" y="315.600" width="4" height="24.600" fill="#d7efd1"/><rect x="1276.5" y="315.600" width="1.5" height="24.600" fill="#d7efd1"/><rect x="1280.0" y="315.600" width="2.5" height="24.600" fill="#d7efd1"/><rect x="1284.0" y="315.600" width="1.2" height="24.600" fill="#d7efd1"/><rect x="1294.2" y="315.600" width="2" height="24.600" fill="#d7efd1"/><rect x="1298.2" y="315.600" width="4" height="24.600" fill="#d7efd1"/><rect x="1304.2" y="315.600" width="4" height="24.600" fill="#d7efd1"/><rect x="1314.2" y="315.600" width="1" height="24.600" fill="#d7efd1"/><rect x="1317.7" y="315.600" width="4" height="24.600" fill="#d7efd1"/><rect x="1330.7" y="315.600" width="1.5" height="24.600" fill="#d7efd1"/><rect x="1341.2" y="315.600" width="1.2" height="24.600" fill="#d7efd1"/><rect x="1351.4" y="315.600" width="1.5" height="24.600" fill="#d7efd1"/><rect x="1355.9" y="315.600" width="2.5" height="24.600" fill="#d7efd1"/><rect x="1373.4" y="315.600" width="1.5" height="24.600" fill="#d7efd1"/><rect x="1377.9" y="315.600" width="1.2" height="24.600" fill="#d7efd1"/><rect x="1388.1" y="315.600" width="1.5" height="24.600" fill="#d7efd1"/><rect x="1" y="347" width="32.800" height="23.300" fill="#3b78e7"/><rect x="5" y="350" width="28.800" height="17.500" fill="#c3c8f0"/><rect x="71.700" y="347.500" width="20.500" height="22" fill="#f1d4d1" stroke="#c9302c" stroke-width="1"/><rect x="71.200" y="347" width="21.400" height="2.500" fill="#c9302c"/><rect x="1" y="407" width="3" height="164" fill="#2f72e4"/><rect x="1" y="407" width="15" height="2" fill="#2f72e4"/><rect x="7" y="435.500" width="1" height="23.500" fill="#cdcdcd"/><rect x="32.5" y="435.500" width="1.5" height="23.500" fill="#cdcdcd"/><rect x="49" y="435.500" width="1" height="23.500" fill="#cdcdcd"/><rect x="61" y="435.500" width="1" height="23.500" fill="#cdcdcd"/><rect x="64.3" y="435.500" width="1" height="23.500" fill="#cdcdcd"/><rect x="1405.5" y="435.500" width="1" height="23" fill="#bdbdbd"/><rect x="1423.5" y="435.500" width="1" height="23" fill="#bdbdbd"/><rect x="1429.5" y="435.500" width="1" height="23" fill="#bdbdbd"/><rect x="1429" y="460.500" width="1.200" height="23.500" fill="#6fb46a"/><rect x="1429" y="486" width="1.200" height="23.500" fill="#a48ae8"/><rect x="67" y="435.3" width="1329.6" height="23.2" fill="url(#st0)"/><rect x="71" y="460.4" width="1324.8" height="23.8" fill="url(#st1)"/><rect x="67" y="485.9" width="1327" height="23.8" fill="url(#st2)"/><rect x="67" y="511.3" width="1327" height="24" fill="url(#st3)"/><rect x="67" y="537" width="1321" height="24" fill="url(#st4)"/><rect x="67" y="562.5" width="1321" height="8.7" fill="url(#st5)"/><rect x="72.0" y="460.4" width="2" height="23.8" fill="#c9b9f5"/><rect x="72.0" y="485.9" width="2" height="23.8" fill="#c9b9f5"/><rect x="75.0" y="460.4" width="1" height="23.8" fill="#c9b9f5"/><rect x="99.0" y="460.4" width="3" height="23.8" fill="#a58af0"/><rect x="102.0" y="460.4" width="3" height="23.8" fill="#a3d5a3"/><rect x="102.0" y="485.9" width="3" height="23.8" fill="#a3d5a3"/><rect x="111.0" y="460.4" width="2" height="23.8" fill="#a3d5a3"/><rect x="111.0" y="485.9" width="2" height="23.8" fill="#a3d5a3"/><rect x="129.0" y="460.4" width="1" height="23.8" fill="#a58af0"/><rect x="135.0" y="460.4" width="1" height="23.8" fill="#a58af0"/><rect x="141.0" y="460.4" width="1.2" height="23.8" fill="#a3d5a3"/><rect x="141.0" y="485.9" width="1.2" height="23.8" fill="#a3d5a3"/><rect x="147.0" y="460.4" width="1" height="23.8" fill="#b9a6f3"/><rect x="156.0" y="460.4" width="3" height="23.8" fill="#b9a6f3"/><rect x="156.0" y="485.9" width="3" height="23.8" fill="#b9a6f3"/><rect x="165.0" y="460.4" width="3" height="23.8" fill="#a58af0"/><rect x="177.0" y="460.4" width="3" height="23.8" fill="#a58af0"/><rect x="180.0" y="460.4" width="1.2" height="23.8" fill="#5aa84f"/><rect x="180.0" y="485.9" width="1.2" height="23.8" fill="#5aa84f"/><rect x="192.0" y="460.4" width="1" height="23.8" fill="#5aa84f"/><rect x="192.0" y="485.9" width="1" height="23.8" fill="#5aa84f"/><rect x="198.0" y="460.4" width="1" height="23.8" fill="#a3d5a3"/><rect x="198.0" y="485.9" width="1" height="23.8" fill="#a3d5a3"/><rect x="207.0" y="460.4" width="2" height="23.8" fill="#c9b9f5"/><rect x="210.0" y="460.4" width="1" height="23.8" fill="#5aa84f"/><rect x="210.0" y="485.9" width="1" height="23.8" fill="#5aa84f"/><rect x="222.0" y="460.4" width="3" height="23.8" fill="#a3d5a3"/><rect x="222.0" y="485.9" width="3" height="23.8" fill="#a3d5a3"/><rect x="228.0" y="460.4" width="2" height="23.8" fill="#a58af0"/><rect x="228.0" y="485.9" width="2" height="23.8" fill="#a58af0"/><rect x="240.0" y="460.4" width="3" height="23.8" fill="#b9a6f3"/><rect x="243.0" y="460.4" width="1" height="23.8" fill="#5aa84f"/><rect x="246.0" y="460.4" width="1.2" height="23.8" fill="#c9b9f5"/><rect x="249.0" y="460.4" width="2" height="23.8" fill="#a3d5a3"/><rect x="249.0" y="485.9" width="2" height="23.8" fill="#a3d5a3"/><rect x="258.0" y="460.4" width="1.2" height="23.8" fill="#5aa84f"/><rect x="258.0" y="485.9" width="1.2" height="23.8" fill="#5aa84f"/><rect x="261.0" y="460.4" width="1.2" height="23.8" fill="#b9a6f3"/><rect x="267.0" y="460.4" width="1" height="23.8" fill="#a3d5a3"/><rect x="267.0" y="485.9" width="1" height="23.8" fill="#a3d5a3"/><rect x="279.0" y="460.4" width="1.5" height="23.8" fill="#a58af0"/><rect x="288.0" y="460.4" width="1.2" height="23.8" fill="#c9b9f5"/><rect x="294.0" y="460.4" width="1.5" height="23.8" fill="#b9a6f3"/><rect x="297.0" y="460.4" width="2" height="23.8" fill="#a58af0"/><rect x="309.0" y="460.4" width="2" height="23.8" fill="#a58af0"/><rect x="312.0" y="460.4" width="1.2" height="23.8" fill="#a3d5a3"/><rect x="312.0" y="485.9" width="1.2" height="23.8" fill="#a3d5a3"/><rect x="318.0" y="460.4" width="1.2" height="23.8" fill="#a3d5a3"/><rect x="318.0" y="485.9" width="1.2" height="23.8" fill="#a3d5a3"/><rect x="327.0" y="460.4" width="3" height="23.8" fill="#a58af0"/><rect x="336.0" y="460.4" width="1" height="23.8" fill="#b9a6f3"/><rect x="339.0" y="460.4" width="1" height="23.8" fill="#5aa84f"/><rect x="339.0" y="485.9" width="1" height="23.8" fill="#5aa84f"/><rect x="348.0" y="460.4" width="1.2" height="23.8" fill="#c9b9f5"/><rect x="351.0" y="460.4" width="1.2" height="23.8" fill="#a3d5a3"/><rect x="351.0" y="485.9" width="1.2" height="23.8" fill="#a3d5a3"/><rect x="363.0" y="460.4" width="3" height="23.8" fill="#a3d5a3"/><rect x="366.0" y="460.4" width="1" height="23.8" fill="#c9b9f5"/><rect x="369.0" y="460.4" width="1" height="23.8" fill="#a3d5a3"/><rect x="369.0" y="485.9" width="1" height="23.8" fill="#a3d5a3"/><rect x="384.0" y="460.4" width="1" height="23.8" fill="#b9a6f3"/><rect x="393.0" y="460.4" width="2" height="23.8" fill="#a3d5a3"/><rect x="393.0" y="485.9" width="2" height="23.8" fill="#a3d5a3"/><rect x="405.0" y="460.4" width="1.2" height="23.8" fill="#a3d5a3"/><rect x="411.0" y="460.4" width="1" height="23.8" fill="#a3d5a3"/><rect x="411.0" y="485.9" width="1" height="23.8" fill="#a3d5a3"/><rect x="414.0" y="460.4" width="2" height="23.8" fill="#5aa84f"/><rect x="423.0" y="460.4" width="1.2" height="23.8" fill="#5aa84f"/><rect x="429.0" y="460.4" width="2" height="23.8" fill="#a3d5a3"/><rect x="435.0" y="460.4" width="1" height="23.8" fill="#a3d5a3"/><rect x="435.0" y="485.9" width="1" height="23.8" fill="#a3d5a3"/><rect x="441.0" y="460.4" width="1" height="23.8" fill="#a58af0"/><rect x="450.0" y="460.4" width="1" height="23.8" fill="#a3d5a3"/><rect x="450.0" y="485.9" width="1" height="23.8" fill="#a3d5a3"/><rect x="453.0" y="460.4" width="1" height="23.8" fill="#a3d5a3"/><rect x="453.0" y="485.9" width="1" height="23.8" fill="#a3d5a3"/><rect x="459.0" y="460.4" width="2" height="23.8" fill="#b9a6f3"/><rect x="471.0" y="460.4" width="1.2" height="23.8" fill="#b9a6f3"/><rect x="477.0" y="460.4" width="3" height="23.8" fill="#b9a6f3"/><rect x="483.0" y="460.4" width="3" height="23.8" fill="#a3d5a3"/><rect x="483.0" y="485.9" width="3" height="23.8" fill="#a3d5a3"/><rect x="489.0" y="460.4" width="1.2" height="23.8" fill="#a58af0"/><rect x="510.0" y="460.4" width="1" height="23.8" fill="#b9a6f3"/><rect x="513.0" y="460.4" width="1" height="23.8" fill="#a58af0"/><rect x="516.0" y="460.4" width="1.2" height="23.8" fill="#c9b9f5"/><rect x="522.0" y="460.4" width="1.5" height="23.8" fill="#a58af0"/><rect x="531.0" y="460.4" width="1" height="23.8" fill="#a58af0"/><rect x="537.0" y="460.4" width="1.2" height="23.8" fill="#a3d5a3"/><rect x="543.0" y="460.4" width="3" height="23.8" fill="#a3d5a3"/><rect x="543.0" y="485.9" width="3" height="23.8" fill="#a3d5a3"/><rect x="546.0" y="460.4" width="1.2" height="23.8" fill="#a3d5a3"/><rect x="546.0" y="485.9" width="1.2" height="23.8" fill="#a3d5a3"/><rect x="552.0" y="460.4" width="1" height="23.8" fill="#a3d5a3"/><rect x="552.0" y="485.9" width="1" height="23.8" fill="#a3d5a3"/><rect x="561.0" y="460.4" width="2" height="23.8" fill="#b9a6f3"/><rect x="564.0" y="460.4" width="1" height="23.8" fill="#a3d5a3"/><rect x="564.0" y="485.9" width="1" height="23.8" fill="#a3d5a3"/><rect x="570.0" y="460.4" width="1.5" height="23.8" fill="#b9a6f3"/><rect x="576.0" y="460.4" width="1.2" height="23.8" fill="#a3d5a3"/><rect x="582.0" y="460.4" width="3" height="23.8" fill="#c9b9f5"/><rect x="588.0" y="460.4" width="1.2" height="23.8" fill="#a3d5a3"/><rect x="588.0" y="485.9" width="1.2" height="23.8" fill="#a3d5a3"/><rect x="609.0" y="460.4" width="1.2" height="23.8" fill="#a3d5a3"/><rect x="609.0" y="485.9" width="1.2" height="23.8" fill="#a3d5a3"/><rect x="618.0" y="460.4" width="1.2" height="23.8" fill="#c9b9f5"/><rect x="627.0" y="460.4" width="3" height="23.8" fill="#c9b9f5"/><rect x="630.0" y="460.4" width="1.5" height="23.8" fill="#a58af0"/><rect x="633.0" y="460.4" width="3" height="23.8" fill="#b9a6f3"/><rect x="642.0" y="460.4" width="3" height="23.8" fill="#a3d5a3"/><rect x="645.0" y="460.4" width="1.2" height="23.8" fill="#5aa84f"/><rect x="648.0" y="460.4" width="1" height="23.8" fill="#5aa84f"/><rect x="648.0" y="485.9" width="1" height="23.8" fill="#5aa84f"/><rect x="657.0" y="460.4" width="1" height="23.8" fill="#a3d5a3"/><rect x="669.0" y="460.4" width="2" height="23.8" fill="#a3d5a3"/><rect x="669.0" y="485.9" width="2" height="23.8" fill="#a3d5a3"/><rect x="675.0" y="460.4" width="2" height="23.8" fill="#b9a6f3"/><rect x="678.0" y="460.4" width="1" height="23.8" fill="#b9a6f3"/><rect x="693.0" y="460.4" width="2" height="23.8" fill="#c9b9f5"/><rect x="705.0" y="460.4" width="1" height="23.8" fill="#5aa84f"/><rect x="705.0" y="485.9" width="1" height="23.8" fill="#5aa84f"/><rect x="720.0" y="460.4" width="2" height="23.8" fill="#c9b9f5"/><rect x="726.0" y="460.4" width="3" height="23.8" fill="#a3d5a3"/><rect x="726.0" y="485.9" width="3" height="23.8" fill="#a3d5a3"/><rect x="729.0" y="460.4" width="1" height="23.8" fill="#b9a6f3"/><rect x="741.0" y="460.4" width="2" height="23.8" fill="#5aa84f"/><rect x="741.0" y="485.9" width="2" height="23.8" fill="#5aa84f"/><rect x="747.0" y="460.4" width="1" height="23.8" fill="#a3d5a3"/><rect x="747.0" y="485.9" width="1" height="23.8" fill="#a3d5a3"/><rect x="756.0" y="460.4" width="1.2" height="23.8" fill="#b9a6f3"/><rect x="762.0" y="460.4" width="1.2" height="23.8" fill="#a3d5a3"/><rect x="774.0" y="460.4" width="1.5" height="23.8" fill="#b9a6f3"/><rect x="780.0" y="460.4" width="1" height="23.8" fill="#b9a6f3"/><rect x="789.0" y="460.4" width="1" height="23.8" fill="#a3d5a3"/><rect x="801.0" y="460.4" width="1" height="23.8" fill="#c9b9f5"/><rect x="810.0" y="460.4" width="1.2" height="23.8" fill="#c9b9f5"/><rect x="813.0" y="460.4" width="1.2" height="23.8" fill="#5aa84f"/><rect x="813.0" y="485.9" width="1.2" height="23.8" fill="#5aa84f"/><rect x="825.0" y="460.4" width="3" height="23.8" fill="#a3d5a3"/><rect x="825.0" y="485.9" width="3" height="23.8" fill="#a3d5a3"/><rect x="828.0" y="460.4" width="1" height="23.8" fill="#5aa84f"/><rect x="828.0" y="485.9" width="1" height="23.8" fill="#5aa84f"/><rect x="831.0" y="460.4" width="1" height="23.8" fill="#b9a6f3"/><rect x="843.0" y="460.4" width="2" height="23.8" fill="#a3d5a3"/><rect x="843.0" y="485.9" width="2" height="23.8" fill="#a3d5a3"/><rect x="861.0" y="460.4" width="1" height="23.8" fill="#a3d5a3"/><rect x="861.0" y="485.9" width="1" height="23.8" fill="#a3d5a3"/><rect x="864.0" y="460.4" width="2" height="23.8" fill="#a58af0"/><rect x="864.0" y="485.9" width="2" height="23.8" fill="#a58af0"/><rect x="873.0" y="460.4" width="1.2" height="23.8" fill="#b9a6f3"/><rect x="882.0" y="460.4" width="1.2" height="23.8" fill="#a3d5a3"/><rect x="882.0" y="485.9" width="1.2" height="23.8" fill="#a3d5a3"/><rect x="885.0" y="460.4" width="1" height="23.8" fill="#5aa84f"/><rect x="885.0" y="485.9" width="1" height="23.8" fill="#5aa84f"/><rect x="894.0" y="460.4" width="1" height="23.8" fill="#c9b9f5"/><rect x="903.0" y="460.4" width="2" height="23.8" fill="#a58af0"/><rect x="906.0" y="460.4" width="1" height="23.8" fill="#c9b9f5"/><rect x="909.0" y="460.4" width="2" height="23.8" fill="#a3d5a3"/><rect x="909.0" y="485.9" width="2" height="23.8" fill="#a3d5a3"/><rect x="915.0" y="460.4" width="3" height="23.8" fill="#c9b9f5"/><rect x="915.0" y="485.9" width="3" height="23.8" fill="#c9b9f5"/><rect x="921.0" y="460.4" width="1" height="23.8" fill="#a3d5a3"/><rect x="921.0" y="485.9" width="1" height="23.8" fill="#a3d5a3"/><rect x="927.0" y="460.4" width="1.5" height="23.8" fill="#b9a6f3"/><rect x="930.0" y="460.4" width="3" height="23.8" fill="#5aa84f"/><rect x="930.0" y="485.9" width="3" height="23.8" fill="#5aa84f"/><rect x="933.0" y="460.4" width="2" height="23.8" fill="#5aa84f"/><rect x="936.0" y="460.4" width="1" height="23.8" fill="#5aa84f"/><rect x="945.0" y="460.4" width="1" height="23.8" fill="#a3d5a3"/><rect x="957.0" y="460.4" width="1.2" height="23.8" fill="#c9b9f5"/><rect x="966.0" y="460.4" width="3" height="23.8" fill="#c9b9f5"/><rect x="972.0" y="460.4" width="3" height="23.8" fill="#c9b9f5"/><rect x="972.0" y="485.9" width="3" height="23.8" fill="#c9b9f5"/><rect x="978.0" y="460.4" width="1.2" height="23.8" fill="#a3d5a3"/><rect x="978.0" y="485.9" width="1.2" height="23.8" fill="#a3d5a3"/><rect x="987.0" y="460.4" width="1.2" height="23.8" fill="#a3d5a3"/><rect x="990.0" y="460.4" width="3" height="23.8" fill="#a3d5a3"/><rect x="990.0" y="485.9" width="3" height="23.8" fill="#a3d5a3"/><rect x="996.0" y="460.4" width="3" height="23.8" fill="#a58af0"/><rect x="1020.0" y="460.4" width="1" height="23.8" fill="#c9b9f5"/><rect x="1023.0" y="460.4" width="2" height="23.8" fill="#a3d5a3"/><rect x="1023.0" y="485.9" width="2" height="23.8" fill="#a3d5a3"/><rect x="1029.0" y="460.4" width="1.2" height="23.8" fill="#a3d5a3"/><rect x="1029.0" y="485.9" width="1.2" height="23.8" fill="#a3d5a3"/><rect x="1032.0" y="460.4" width="1.2" height="23.8" fill="#a58af0"/><rect x="1044.0" y="460.4" width="1" height="23.8" fill="#c9b9f5"/><rect x="1053.0" y="460.4" width="1" height="23.8" fill="#a58af0"/><rect x="1059.0" y="460.4" width="3" height="23.8" fill="#a3d5a3"/><rect x="1062.0" y="460.4" width="1" height="23.8" fill="#b9a6f3"/><rect x="1062.0" y="485.9" width="1" height="23.8" fill="#b9a6f3"/><rect x="1065.0" y="460.4" width="1.2" height="23.8" fill="#b9a6f3"/><rect x="1074.0" y="460.4" width="1" height="23.8" fill="#a58af0"/><rect x="1083.0" y="460.4" width="3" height="23.8" fill="#a3d5a3"/><rect x="1083.0" y="485.9" width="3" height="23.8" fill="#a3d5a3"/><rect x="1092.0" y="460.4" width="3" height="23.8" fill="#5aa84f"/><rect x="1092.0" y="485.9" width="3" height="23.8" fill="#5aa84f"/><rect x="1098.0" y="460.4" width="1" height="23.8" fill="#5aa84f"/><rect x="1098.0" y="485.9" width="1" height="23.8" fill="#5aa84f"/><rect x="1107.0" y="460.4" width="2" height="23.8" fill="#b9a6f3"/><rect x="1116.0" y="460.4" width="2" height="23.8" fill="#b9a6f3"/><rect x="1125.0" y="460.4" width="1" height="23.8" fill="#c9b9f5"/><rect x="1125.0" y="485.9" width="1" height="23.8" fill="#c9b9f5"/><rect x="1137.0" y="460.4" width="3" height="23.8" fill="#a3d5a3"/><rect x="1137.0" y="485.9" width="3" height="23.8" fill="#a3d5a3"/><rect x="1140.0" y="460.4" width="1" height="23.8" fill="#a3d5a3"/><rect x="1140.0" y="485.9" width="1" height="23.8" fill="#a3d5a3"/><rect x="1149.0" y="460.4" width="3" height="23.8" fill="#b9a6f3"/><rect x="1158.0" y="460.4" width="2" height="23.8" fill="#5aa84f"/><rect x="1158.0" y="485.9" width="2" height="23.8" fill="#5aa84f"/><rect x="1176.0" y="460.4" width="3" height="23.8" fill="#a58af0"/><rect x="1203.0" y="460.4" width="1.2" height="23.8" fill="#a58af0"/><rect x="1212.0" y="460.4" width="1" height="23.8" fill="#a58af0"/><rect x="1215.0" y="460.4" width="3" height="23.8" fill="#a3d5a3"/><rect x="1218.0" y="460.4" width="1.2" height="23.8" fill="#5aa84f"/><rect x="1218.0" y="485.9" width="1.2" height="23.8" fill="#5aa84f"/><rect x="1221.0" y="460.4" width="2" height="23.8" fill="#a3d5a3"/><rect x="1221.0" y="485.9" width="2" height="23.8" fill="#a3d5a3"/><rect x="1227.0" y="460.4" width="1.2" height="23.8" fill="#a58af0"/><rect x="1242.0" y="460.4" width="1" height="23.8" fill="#a3d5a3"/><rect x="1248.0" y="460.4" width="1" height="23.8" fill="#5aa84f"/><rect x="1248.0" y="485.9" width="1" height="23.8" fill="#5aa84f"/><rect x="1257.0" y="460.4" width="3" height="23.8" fill="#5aa84f"/><rect x="1257.0" y="485.9" width="3" height="23.8" fill="#5aa84f"/><rect x="1263.0" y="460.4" width="1" height="23.8" fill="#5aa84f"/><rect x="1263.0" y="485.9" width="1" height="23.8" fill="#5aa84f"/><rect x="1278.0" y="460.4" width="2" height="23.8" fill="#a3d5a3"/><rect x="1278.0" y="485.9" width="2" height="23.8" fill="#a3d5a3"/><rect x="1287.0" y="460.4" width="1.2" height="23.8" fill="#b9a6f3"/><rect x="1293.0" y="460.4" width="1.5" height="23.8" fill="#b9a6f3"/><rect x="1317.0" y="460.4" width="1.2" height="23.8" fill="#5aa84f"/><rect x="1317.0" y="485.9" width="1.2" height="23.8" fill="#5aa84f"/><rect x="1323.0" y="460.4" width="1" height="23.8" fill="#a3d5a3"/><rect x="1335.0" y="460.4" width="1" height="23.8" fill="#a58af0"/><rect x="1341.0" y="460.4" width="2" height="23.8" fill="#c9b9f5"/><rect x="1341.0" y="485.9" width="2" height="23.8" fill="#c9b9f5"/><rect x="1353.0" y="460.4" width="1.2" height="23.8" fill="#a3d5a3"/><rect x="1353.0" y="485.9" width="1.2" height="23.8" fill="#a3d5a3"/><rect x="1359.0" y="460.4" width="3" height="23.8" fill="#b9a6f3"/><rect x="1359.0" y="485.9" width="3" height="23.8" fill="#b9a6f3"/><rect x="1368.0" y="460.4" width="1" height="23.8" fill="#a3d5a3"/><rect x="1374.0" y="460.4" width="2" height="23.8" fill="#5aa84f"/><rect x="1374.0" y="485.9" width="2" height="23.8" fill="#5aa84f"/><rect x="1386.0" y="460.4" width="3" height="23.8" fill="#c9b9f5"/><rect x="1389.0" y="460.4" width="1.2" height="23.8" fill="#a58af0"/><rect x="64.300" y="460.400" width="0.800" height="23.800" fill="#5b8fe0"/><rect x="67" y="460.400" width="4.300" height="23.800" fill="#6a9ad8"/><rect x="67" y="485.900" width="0.800" height="23.800" fill="#a58af0"/><rect x="68" y="485.900" width="3" height="23.800" fill="#eec050"/><rect x="1387.500" y="460.400" width="1" height="23.800" fill="#5b8fe0"/><rect x="1390.500" y="460.400" width="2" height="23.800" fill="#5b8fe0"/><rect x="1393.500" y="460.400" width="2.300" height="23.800" fill="#c9b9f5"/><rect x="1393" y="486" width="1.200" height="23.600" fill="#5aa84f"/><rect x="1393" y="511.500" width="1.200" height="23.600" fill="#5aa84f"/><rect x="1390" y="511.500" width="2" height="23.600" fill="#f2cd6c"/><rect x="100.3" y="511.500" width="1.200" height="23.600" fill="#efc356"/><rect x="691" y="511.500" width="1.200" height="23.600" fill="#efc356"/><rect x="877" y="511.500" width="1.200" height="23.600" fill="#efc356"/><rect x="1245" y="511.500" width="1.200" height="23.600" fill="#efc356"/><rect x="1390" y="511.500" width="1.200" height="23.600" fill="#efc356"/><rect x="69.0" y="537" width="3" height="24" fill="#e6dbfa"/><rect x="78.0" y="537" width="3" height="24" fill="#c6b8f4"/><rect x="99.0" y="537" width="2" height="24" fill="#d9cdf7"/><rect x="126.0" y="537" width="3" height="24" fill="#d9cdf7"/><rect x="168.0" y="537" width="1" height="24" fill="#d9cdf7"/><rect x="183.0" y="537" width="1" height="24" fill="#e6dbfa"/><rect x="198.0" y="537" width="1" height="24" fill="#8f74ea"/><rect x="219.0" y="537" width="3" height="24" fill="#d9cdf7"/><rect x="225.0" y="537" width="2" height="24" fill="#c6b8f4"/><rect x="246.0" y="537" width="3" height="24" fill="#cfc4f5"/><rect x="249.0" y="537" width="3" height="24" fill="#e6dbfa"/><rect x="258.0" y="537" width="1" height="24" fill="#c6b8f4"/><rect x="279.0" y="537" width="3" height="24" fill="#c6b8f4"/><rect x="285.0" y="537" width="3" height="24" fill="#d9cdf7"/><rect x="288.0" y="537" width="3" height="24" fill="#c6b8f4"/><rect x="294.0" y="537" width="2" height="24" fill="#cfc4f5"/><rect x="312.0" y="537" width="3" height="24" fill="#c6b8f4"/><rect x="321.0" y="537" width="3" height="24" fill="#c6b8f4"/><rect x="336.0" y="537" width="2" height="24" fill="#e6dbfa"/><rect x="345.0" y="537" width="3" height="24" fill="#c6b8f4"/><rect x="348.0" y="537" width="3" height="24" fill="#d9cdf7"/><rect x="360.0" y="537" width="3" height="24" fill="#c6b8f4"/><rect x="390.0" y="537" width="1" height="24" fill="#c6b8f4"/><rect x="405.0" y="537" width="2" height="24" fill="#c6b8f4"/><rect x="426.0" y="537" width="2" height="24" fill="#cfc4f5"/><rect x="435.0" y="537" width="3" height="24" fill="#c6b8f4"/><rect x="456.0" y="537" width="3" height="24" fill="#cfc4f5"/><rect x="462.0" y="537" width="1" height="24" fill="#8f74ea"/><rect x="471.0" y="537" width="2" height="24" fill="#d9cdf7"/><rect x="477.0" y="537" width="3" height="24" fill="#cfc4f5"/><rect x="486.0" y="537" width="2" height="24" fill="#d9cdf7"/><rect x="492.0" y="537" width="2" height="24" fill="#c6b8f4"/><rect x="501.0" y="537" width="1" height="24" fill="#d9cdf7"/><rect x="534.0" y="537" width="1" height="24" fill="#8f74ea"/><rect x="549.0" y="537" width="3" height="24" fill="#d9cdf7"/><rect x="558.0" y="537" width="2" height="24" fill="#cfc4f5"/><rect x="561.0" y="537" width="3" height="24" fill="#c6b8f4"/><rect x="564.0" y="537" width="3" height="24" fill="#cfc4f5"/><rect x="585.0" y="537" width="2" height="24" fill="#e6dbfa"/><rect x="597.0" y="537" width="3" height="24" fill="#c6b8f4"/><rect x="627.0" y="537" width="3" height="24" fill="#e6dbfa"/><rect x="636.0" y="537" width="1" height="24" fill="#8f74ea"/><rect x="648.0" y="537" width="2" height="24" fill="#c6b8f4"/><rect x="672.0" y="537" width="2" height="24" fill="#d9cdf7"/><rect x="681.0" y="537" width="2" height="24" fill="#d9cdf7"/><rect x="693.0" y="537" width="2" height="24" fill="#d9cdf7"/><rect x="708.0" y="537" width="1" height="24" fill="#8f74ea"/><rect x="729.0" y="537" width="1" height="24" fill="#8f74ea"/><rect x="753.0" y="537" width="2" height="24" fill="#c6b8f4"/><rect x="768.0" y="537" width="2" height="24" fill="#e6dbfa"/><rect x="777.0" y="537" width="2" height="24" fill="#cfc4f5"/><rect x="783.0" y="537" width="2" height="24" fill="#e6dbfa"/><rect x="792.0" y="537" width="1" height="24" fill="#cfc4f5"/><rect x="801.0" y="537" width="1" height="24" fill="#8f74ea"/><rect x="831.0" y="537" width="2" height="24" fill="#e6dbfa"/><rect x="837.0" y="537" width="1" height="24" fill="#8f74ea"/><rect x="849.0" y="537" width="2" height="24" fill="#e6dbfa"/><rect x="864.0" y="537" width="3" height="24" fill="#e6dbfa"/><rect x="876.0" y="537" width="1" height="24" fill="#8f74ea"/><rect x="885.0" y="537" width="1" height="24" fill="#cfc4f5"/><rect x="900.0" y="537" width="1" height="24" fill="#8f74ea"/><rect x="927.0" y="537" width="3" height="24" fill="#d9cdf7"/><rect x="933.0" y="537" width="2" height="24" fill="#e6dbfa"/><rect x="954.0" y="537" width="1" height="24" fill="#c6b8f4"/><rect x="963.0" y="537" width="2" height="24" fill="#c6b8f4"/><rect x="972.0" y="537" width="3" height="24" fill="#cfc4f5"/><rect x="975.0" y="537" width="3" height="24" fill="#d9cdf7"/><rect x="987.0" y="537" width="1" height="24" fill="#d9cdf7"/><rect x="1008.0" y="537" width="2" height="24" fill="#c6b8f4"/><rect x="1014.0" y="537" width="3" height="24" fill="#cfc4f5"/><rect x="1023.0" y="537" width="2" height="24" fill="#e6dbfa"/><rect x="1044.0" y="537" width="2" height="24" fill="#e6dbfa"/><rect x="1056.0" y="537" width="3" height="24" fill="#c6b8f4"/><rect x="1077.0" y="537" width="1" height="24" fill="#8f74ea"/><rect x="1098.0" y="537" width="3" height="24" fill="#d9cdf7"/><rect x="1104.0" y="537" width="3" height="24" fill="#cfc4f5"/><rect x="1107.0" y="537" width="3" height="24" fill="#cfc4f5"/><rect x="1116.0" y="537" width="2" height="24" fill="#e6dbfa"/><rect x="1128.0" y="537" width="2" height="24" fill="#c6b8f4"/><rect x="1143.0" y="537" width="2" height="24" fill="#e6dbfa"/><rect x="1149.0" y="537" width="1" height="24" fill="#8f74ea"/><rect x="1164.0" y="537" width="2" height="24" fill="#c6b8f4"/><rect x="1191.0" y="537" width="2" height="24" fill="#e6dbfa"/><rect x="1200.0" y="537" width="3" height="24" fill="#cfc4f5"/><rect x="1206.0" y="537" width="1" height="24" fill="#8f74ea"/><rect x="1221.0" y="537" width="3" height="24" fill="#d9cdf7"/><rect x="1236.0" y="537" width="1" height="24" fill="#cfc4f5"/><rect x="1242.0" y="537" width="2" height="24" fill="#cfc4f5"/><rect x="1251.0" y="537" width="3" height="24" fill="#cfc4f5"/><rect x="1272.0" y="537" width="2" height="24" fill="#e6dbfa"/><rect x="1278.0" y="537" width="1" height="24" fill="#e6dbfa"/><rect x="1299.0" y="537" width="2" height="24" fill="#e6dbfa"/><rect x="1302.0" y="537" width="3" height="24" fill="#c6b8f4"/><rect x="1311.0" y="537" width="2" height="24" fill="#e6dbfa"/><rect x="1320.0" y="537" width="1" height="24" fill="#8f74ea"/><rect x="1329.0" y="537" width="2" height="24" fill="#d9cdf7"/><rect x="1335.0" y="537" width="1" height="24" fill="#8f74ea"/><rect x="1344.0" y="537" width="1" height="24" fill="#c6b8f4"/><rect x="1356.0" y="537" width="2" height="24" fill="#cfc4f5"/><rect x="1377.0" y="537" width="1" height="24" fill="#8f74ea"/><rect x="67.0" y="562.5" width="2.5" height="8.7" fill="#f1e6fb"/><rect x="76.5" y="562.5" width="1" height="8.7" fill="#e6d9fb"/><rect x="84.5" y="562.5" width="2.5" height="8.7" fill="#dccdf8"/><rect x="99.0" y="562.5" width="2.5" height="8.7" fill="#f1e6fb"/><rect x="106.5" y="562.5" width="1.5" height="8.7" fill="#f1e6fb"/><rect x="120.0" y="562.5" width="1.5" height="8.7" fill="#f1e6fb"/><rect x="128.5" y="562.5" width="3" height="8.7" fill="#e6d9fb"/><rect x="135.5" y="562.5" width="1" height="8.7" fill="#e6d9fb"/><rect x="143.5" y="562.5" width="1" height="8.7" fill="#dccdf8"/><rect x="147.5" y="562.5" width="2" height="8.7" fill="#f1e6fb"/><rect x="152.5" y="562.5" width="2.5" height="8.7" fill="#f1e6fb"/><rect x="158.0" y="562.5" width="2.5" height="8.7" fill="#f1e6fb"/><rect x="163.5" y="562.5" width="1.5" height="8.7" fill="#e6d9fb"/><rect x="170.0" y="562.5" width="1" height="8.7" fill="#dccdf8"/><rect x="176.0" y="562.5" width="1.5" height="8.7" fill="#dccdf8"/><rect x="183.5" y="562.5" width="2" height="8.7" fill="#f1e6fb"/><rect x="197.5" y="562.5" width="2.5" height="8.7" fill="#dccdf8"/><rect x="212.0" y="562.5" width="1" height="8.7" fill="#f1e6fb"/><rect x="219.0" y="562.5" width="3" height="8.7" fill="#f1e6fb"/><rect x="227.0" y="562.5" width="2.5" height="8.7" fill="#e6d9fb"/><rect x="232.5" y="562.5" width="2.5" height="8.7" fill="#e6d9fb"/><rect x="239.0" y="562.5" width="2" height="8.7" fill="#f1e6fb"/><rect x="250.0" y="562.5" width="2" height="8.7" fill="#dccdf8"/><rect x="261.0" y="562.5" width="2" height="8.7" fill="#f1e6fb"/><rect x="272.0" y="562.5" width="3" height="8.7" fill="#f1e6fb"/><rect x="280.0" y="562.5" width="2" height="8.7" fill="#f1e6fb"/><rect x="285.0" y="562.5" width="3" height="8.7" fill="#f1e6fb"/><rect x="295.0" y="562.5" width="1" height="8.7" fill="#f1e6fb"/><rect x="301.0" y="562.5" width="1.5" height="8.7" fill="#dccdf8"/><rect x="306.5" y="562.5" width="1.5" height="8.7" fill="#e6d9fb"/><rect x="317.0" y="562.5" width="1.5" height="8.7" fill="#dccdf8"/><rect x="323.5" y="562.5" width="3" height="8.7" fill="#e6d9fb"/><rect x="330.5" y="562.5" width="2" height="8.7" fill="#e6d9fb"/><rect x="336.5" y="562.5" width="1.5" height="8.7" fill="#f1e6fb"/><rect x="343.0" y="562.5" width="1.5" height="8.7" fill="#f1e6fb"/><rect x="347.5" y="562.5" width="1" height="8.7" fill="#f1e6fb"/><rect x="355.5" y="562.5" width="1" height="8.7" fill="#f1e6fb"/><rect x="359.5" y="562.5" width="2" height="8.7" fill="#dccdf8"/><rect x="373.5" y="562.5" width="1.5" height="8.7" fill="#e6d9fb"/><rect x="379.0" y="562.5" width="2" height="8.7" fill="#e6d9fb"/><rect x="393.0" y="562.5" width="2.5" height="8.7" fill="#e6d9fb"/><rect x="402.5" y="562.5" width="2" height="8.7" fill="#f1e6fb"/><rect x="410.5" y="562.5" width="1.5" height="8.7" fill="#f1e6fb"/><rect x="418.0" y="562.5" width="3" height="8.7" fill="#e6d9fb"/><rect x="433.0" y="562.5" width="2" height="8.7" fill="#e6d9fb"/><rect x="444.0" y="562.5" width="2" height="8.7" fill="#f1e6fb"/><rect x="450.0" y="562.5" width="2" height="8.7" fill="#dccdf8"/><rect x="455.0" y="562.5" width="1.5" height="8.7" fill="#dccdf8"/><rect x="465.5" y="562.5" width="3" height="8.7" fill="#f1e6fb"/><rect x="477.5" y="562.5" width="1" height="8.7" fill="#e6d9fb"/><rect x="485.5" y="562.5" width="2.5" height="8.7" fill="#f1e6fb"/><rect x="494.0" y="562.5" width="3" height="8.7" fill="#dccdf8"/><rect x="503.0" y="562.5" width="2.5" height="8.7" fill="#dccdf8"/><rect x="508.5" y="562.5" width="1" height="8.7" fill="#dccdf8"/><rect x="518.5" y="562.5" width="3" height="8.7" fill="#f1e6fb"/><rect x="527.5" y="562.5" width="3" height="8.7" fill="#f1e6fb"/><rect x="536.5" y="562.5" width="2" height="8.7" fill="#dccdf8"/><rect x="542.5" y="562.5" width="2" height="8.7" fill="#dccdf8"/><rect x="551.5" y="562.5" width="2.5" height="8.7" fill="#e6d9fb"/><rect x="561.0" y="562.5" width="1" height="8.7" fill="#dccdf8"/><rect x="571.0" y="562.5" width="2" height="8.7" fill="#f1e6fb"/><rect x="578.0" y="562.5" width="2.5" height="8.7" fill="#e6d9fb"/><rect x="587.5" y="562.5" width="1" height="8.7" fill="#f1e6fb"/><rect x="592.5" y="562.5" width="2.5" height="8.7" fill="#f1e6fb"/><rect x="600.0" y="562.5" width="2" height="8.7" fill="#dccdf8"/><rect x="609.0" y="562.5" width="2" height="8.7" fill="#e6d9fb"/><rect x="620.0" y="562.5" width="2" height="8.7" fill="#dccdf8"/><rect x="628.0" y="562.5" width="1" height="8.7" fill="#e6d9fb"/><rect x="641.0" y="562.5" width="2" height="8.7" fill="#e6d9fb"/><rect x="647.0" y="562.5" width="1.5" height="8.7" fill="#dccdf8"/><rect x="660.5" y="562.5" width="1.5" height="8.7" fill="#e6d9fb"/><rect x="674.0" y="562.5" width="1" height="8.7" fill="#dccdf8"/><rect x="680.0" y="562.5" width="2" height="8.7" fill="#e6d9fb"/><rect x="686.0" y="562.5" width="1" height="8.7" fill="#dccdf8"/><rect x="692.0" y="562.5" width="2" height="8.7" fill="#dccdf8"/><rect x="706.0" y="562.5" width="2" height="8.7" fill="#f1e6fb"/><rect x="712.0" y="562.5" width="2.5" height="8.7" fill="#e6d9fb"/><rect x="726.5" y="562.5" width="2" height="8.7" fill="#e6d9fb"/><rect x="734.5" y="562.5" width="2" height="8.7" fill="#dccdf8"/><rect x="740.5" y="562.5" width="1" height="8.7" fill="#e6d9fb"/><rect x="748.5" y="562.5" width="2" height="8.7" fill="#f1e6fb"/><rect x="754.5" y="562.5" width="1" height="8.7" fill="#f1e6fb"/><rect x="767.5" y="562.5" width="1" height="8.7" fill="#dccdf8"/><rect x="771.5" y="562.5" width="1.5" height="8.7" fill="#f1e6fb"/><rect x="777.0" y="562.5" width="1" height="8.7" fill="#f1e6fb"/><rect x="781.0" y="562.5" width="2" height="8.7" fill="#e6d9fb"/><rect x="795.0" y="562.5" width="2" height="8.7" fill="#e6d9fb"/><rect x="803.0" y="562.5" width="1.5" height="8.7" fill="#dccdf8"/><rect x="810.5" y="562.5" width="1" height="8.7" fill="#dccdf8"/><rect x="818.5" y="562.5" width="2" height="8.7" fill="#f1e6fb"/><rect x="823.5" y="562.5" width="1" height="8.7" fill="#dccdf8"/><rect x="828.5" y="562.5" width="2.5" height="8.7" fill="#dccdf8"/><rect x="836.0" y="562.5" width="3" height="8.7" fill="#e6d9fb"/><rect x="846.0" y="562.5" width="3" height="8.7" fill="#f1e6fb"/><rect x="855.0" y="562.5" width="1" height="8.7" fill="#f1e6fb"/><rect x="865.0" y="562.5" width="2" height="8.7" fill="#dccdf8"/><rect x="872.0" y="562.5" width="3" height="8.7" fill="#dccdf8"/><rect x="879.0" y="562.5" width="3" height="8.7" fill="#e6d9fb"/><rect x="886.0" y="562.5" width="1.5" height="8.7" fill="#e6d9fb"/><rect x="896.5" y="562.5" width="2.5" height="8.7" fill="#f1e6fb"/><rect x="902.0" y="562.5" width="1.5" height="8.7" fill="#f1e6fb"/><rect x="906.5" y="562.5" width="2" height="8.7" fill="#f1e6fb"/><rect x="915.5" y="562.5" width="2.5" height="8.7" fill="#f1e6fb"/><rect x="923.0" y="562.5" width="1.5" height="8.7" fill="#e6d9fb"/><rect x="927.5" y="562.5" width="3" height="8.7" fill="#e6d9fb"/><rect x="939.5" y="562.5" width="3" height="8.7" fill="#f1e6fb"/><rect x="954.5" y="562.5" width="2" height="8.7" fill="#f1e6fb"/><rect x="960.5" y="562.5" width="1.5" height="8.7" fill="#e6d9fb"/><rect x="971.0" y="562.5" width="2" height="8.7" fill="#f1e6fb"/><rect x="978.0" y="562.5" width="2.5" height="8.7" fill="#f1e6fb"/><rect x="985.5" y="562.5" width="2" height="8.7" fill="#e6d9fb"/><rect x="994.5" y="562.5" width="1" height="8.7" fill="#e6d9fb"/><rect x="1000.5" y="562.5" width="2.5" height="8.7" fill="#dccdf8"/><rect x="1009.0" y="562.5" width="1.5" height="8.7" fill="#f1e6fb"/><rect x="1017.5" y="562.5" width="1" height="8.7" fill="#f1e6fb"/><rect x="1021.5" y="562.5" width="2" height="8.7" fill="#e6d9fb"/><rect x="1032.5" y="562.5" width="3" height="8.7" fill="#f1e6fb"/><rect x="1039.5" y="562.5" width="2" height="8.7" fill="#f1e6fb"/><rect x="1045.5" y="562.5" width="3" height="8.7" fill="#f1e6fb"/><rect x="1055.5" y="562.5" width="1.5" height="8.7" fill="#f1e6fb"/><rect x="1066.0" y="562.5" width="1" height="8.7" fill="#f1e6fb"/><rect x="1073.0" y="562.5" width="2" height="8.7" fill="#f1e6fb"/><rect x="1082.0" y="562.5" width="2" height="8.7" fill="#dccdf8"/><rect x="1089.0" y="562.5" width="2" height="8.7" fill="#dccdf8"/><rect x="1100.0" y="562.5" width="1" height="8.7" fill="#dccdf8"/><rect x="1108.0" y="562.5" width="1.5" height="8.7" fill="#e6d9fb"/><rect x="1115.5" y="562.5" width="2" height="8.7" fill="#e6d9fb"/><rect x="1124.5" y="562.5" width="2" height="8.7" fill="#f1e6fb"/><rect x="1132.5" y="562.5" width="2" height="8.7" fill="#f1e6fb"/><rect x="1137.5" y="562.5" width="2.5" height="8.7" fill="#e6d9fb"/><rect x="1147.0" y="562.5" width="3" height="8.7" fill="#e6d9fb"/><rect x="1156.0" y="562.5" width="1.5" height="8.7" fill="#e6d9fb"/><rect x="1169.5" y="562.5" width="2" height="8.7" fill="#e6d9fb"/><rect x="1176.5" y="562.5" width="1" height="8.7" fill="#dccdf8"/><rect x="1184.5" y="562.5" width="3" height="8.7" fill="#dccdf8"/><rect x="1192.5" y="562.5" width="1" height="8.7" fill="#dccdf8"/><rect x="1202.5" y="562.5" width="1.5" height="8.7" fill="#f1e6fb"/><rect x="1207.0" y="562.5" width="2" height="8.7" fill="#e6d9fb"/><rect x="1215.0" y="562.5" width="2.5" height="8.7" fill="#f1e6fb"/><rect x="1223.5" y="562.5" width="3" height="8.7" fill="#dccdf8"/><rect x="1233.5" y="562.5" width="1" height="8.7" fill="#e6d9fb"/><rect x="1237.5" y="562.5" width="2" height="8.7" fill="#f1e6fb"/><rect x="1251.5" y="562.5" width="1.5" height="8.7" fill="#dccdf8"/><rect x="1260.0" y="562.5" width="3" height="8.7" fill="#e6d9fb"/><rect x="1266.0" y="562.5" width="1" height="8.7" fill="#f1e6fb"/><rect x="1276.0" y="562.5" width="2" height="8.7" fill="#dccdf8"/><rect x="1282.0" y="562.5" width="2.5" height="8.7" fill="#dccdf8"/><rect x="1288.5" y="562.5" width="2" height="8.7" fill="#f1e6fb"/><rect x="1302.5" y="562.5" width="1.5" height="8.7" fill="#dccdf8"/><rect x="1310.0" y="562.5" width="1" height="8.7" fill="#dccdf8"/><rect x="1323.0" y="562.5" width="1" height="8.7" fill="#e6d9fb"/><rect x="1328.0" y="562.5" width="3" height="8.7" fill="#dccdf8"/><rect x="1338.0" y="562.5" width="3" height="8.7" fill="#f1e6fb"/><rect x="1350.0" y="562.5" width="3" height="8.7" fill="#f1e6fb"/><rect x="1365.0" y="562.5" width="1" height="8.7" fill="#f1e6fb"/><rect x="1372.0" y="562.5" width="1.5" height="8.7" fill="#e6d9fb"/><rect x="1378.5" y="562.5" width="2" height="8.7" fill="#e6d9fb"/><rect x="1383.5" y="562.5" width="2" height="8.7" fill="#f1e6fb"/><path d="M67 435.300H70.500V447L67 443Z" fill="#e01b1b"/><path d="M1390 435.300H1392V446L1390 444Z" fill="#e01b1b"/><rect x="21" y="261" width="1.500" height="310" fill="rgba(0,0,0,0.085)"/><rect x="137" y="261" width="1.500" height="310" fill="rgba(0,0,0,0.085)"/><rect x="253" y="261" width="1.500" height="310" fill="rgba(0,0,0,0.085)"/><rect x="369" y="261" width="1.500" height="310" fill="rgba(0,0,0,0.085)"/><rect x="485" y="261" width="1.500" height="310" fill="rgba(0,0,0,0.085)"/><rect x="601" y="261" width="1.500" height="310" fill="rgba(0,0,0,0.085)"/><rect x="717" y="261" width="1.500" height="310" fill="rgba(0,0,0,0.085)"/><rect x="833" y="261" width="1.500" height="310" fill="rgba(0,0,0,0.085)"/><rect x="949" y="261" width="1.500" height="310" fill="rgba(0,0,0,0.085)"/><rect x="1065" y="261" width="1.500" height="310" fill="rgba(0,0,0,0.085)"/><rect x="1181" y="261" width="1.500" height="310" fill="rgba(0,0,0,0.085)"/><rect x="1297" y="261" width="1.500" height="310" fill="rgba(0,0,0,0.085)"/><rect x="1413" y="261" width="1.500" height="310" fill="rgba(0,0,0,0.085)"/><rect x="0" y="261" width="1" height="310" fill="#c8c8c8"/><path d="M72.500 317V571" stroke="#c62828" stroke-width="1.400" stroke-dasharray="8 3" fill="none"/><path d="M1393.500 435V458" stroke="#e57b78" stroke-width="1" stroke-dasharray="5 3" fill="none"/></svg><div class="t" style="left:-49.00px;top:264.00px;font-size:16.5px;color:#333;letter-spacing:0.028px;">6000 ms</div><div class="t" style="left:67.00px;top:264.00px;font-size:16.5px;color:#333;letter-spacing:0.028px;">8000 ms</div><div class="t" style="left:173.40px;top:264.00px;font-size:16.5px;color:#333;letter-spacing:0.084px;">10000 ms</div><div class="t" style="left:289.40px;top:264.00px;font-size:16.5px;color:#333;letter-spacing:0.084px;">12000 ms</div><div class="t" style="left:405.40px;top:264.00px;font-size:16.5px;color:#333;letter-spacing:0.084px;">14000 ms</div><div class="t" style="left:521.40px;top:264.00px;font-size:16.5px;color:#333;letter-spacing:0.084px;">16000 ms</div><div class="t" style="left:637.40px;top:264.00px;font-size:16.5px;color:#333;letter-spacing:0.084px;">18000 ms</div><div class="t" style="left:754.40px;top:264.00px;font-size:16.5px;color:#333;letter-spacing:-0.059px;">20000 ms</div><div class="t" style="left:870.40px;top:264.00px;font-size:16.5px;color:#333;letter-spacing:-0.059px;">22000 ms</div><div class="t" style="left:986.40px;top:264.00px;font-size:16.5px;color:#333;letter-spacing:-0.059px;">24000 ms</div><div class="t" style="left:1102.40px;top:264.00px;font-size:16.5px;color:#333;letter-spacing:-0.059px;">26000 ms</div><div class="t" style="left:1218.40px;top:264.00px;font-size:16.5px;color:#333;letter-spacing:-0.059px;">28000 ms</div><div class="t" style="left:1334.40px;top:264.00px;font-size:16.5px;color:#333;letter-spacing:-0.059px;">30000 ms</div><div class="t" style="left:27.50px;top:291.00px;font-size:16.5px;color:#333;letter-spacing:0.089px;">Network</div><div class="t" style="left:27.50px;top:319.00px;font-size:16.5px;color:#333;letter-spacing:-0.174px;">Frames</div><div class="t" style="left:28.50px;top:351.00px;font-size:16.5px;color:#333;letter-spacing:0.234px;">Timings</div><div class="t" style="left:27.50px;top:382.00px;font-size:16.5px;color:#333;letter-spacing:-0.186px;">Experience</div><div class="t" style="left:27.40px;top:414.00px;font-size:16.5px;color:#333;letter-spacing:-0.029px;">Main</div><div class="t" style="left:70.00px;top:414.00px;font-size:16.5px;color:#333;transform-origin:0.00px 0;transform:scaleX(0.624);">—</div><div class="t" style="left:85.10px;top:414.00px;font-size:16.5px;color:#333;letter-spacing:-0.047px;">https://heavy-ads.glitch.me/?ad=%2Fcpu%2F_ads.html&amp;n=1588943672103</div><div class="t" style="left:-9.50px;top:351.00px;font-size:16.5px;color:#f4f6fe;letter-spacing:-0.666px;">DCL</div><svg style="left:11px;top:293px" width="11" height="12" viewBox="0 0 11 12"><path d="M0 0L10.500 6L0 12Z" fill="#6e6e6e"/></svg><svg style="left:10px;top:417.500px" width="12" height="9.500" viewBox="0 0 12 9"><path d="M0 0H12L6 9Z" fill="#6e6e6e"/></svg><div class="a" style="left:1434.500px;top:261px;width:15.500px;height:310px;background:#f1f1f1"></div><div class="a" style="left:1437px;top:276px;width:11px;height:21px;background:#c1c1c1"></div><div class="a" style="left:1437px;top:327px;width:11px;height:101px;background:#c1c1c1"></div><svg style="left:1438px;top:267px" width="9" height="5" viewBox="0 0 9 5"><path d="M0 5H9L4.500 0Z" fill="#a6a6a6"/></svg><svg style="left:1438px;top:301.500px" width="9" height="5" viewBox="0 0 9 5"><path d="M0 0H9L4.500 5Z" fill="#505050"/></svg><svg style="left:1438px;top:318px" width="9" height="5" viewBox="0 0 9 5"><path d="M0 5H9L4.500 0Z" fill="#a6a6a6"/></svg><svg style="left:1438px;top:560px" width="9" height="5" viewBox="0 0 9 5"><path d="M0 0H9L4.500 5Z" fill="#505050"/></svg><div class="a" style="left:0;top:571px;width:1450px;height:2px;background:#cdcdcd"></div><div class="bar" style="top:573px;height:38px"></div><div class="a" style="left:1px;top:573px;width:107px;height:38px;background:#e8e8e8"></div><div class="a" style="left:0;top:611px;width:1450px;height:2px;background:#cdcdcd"></div><div class="a" style="left:1px;top:610px;width:107px;height:1px;background:rgba(26,115,232,.18)"></div><div class="a" style="left:1px;top:611px;width:107px;height:2px;background:#1a6ce0"></div><div class="t" style="left:16.00px;top:583.00px;font-size:18px;color:#333;letter-spacing:-0.252px;">Summary</div><div class="t" style="left:121.50px;top:583.00px;font-size:18px;color:#5a5a5a;letter-spacing:-0.077px;">Bottom-Up</div><div class="t" style="left:237.70px;top:583.00px;font-size:18px;color:#5a5a5a;letter-spacing:-0.468px;">Call Tree</div><div class="t" style="left:336.20px;top:583.00px;font-size:18px;color:#5a5a5a;letter-spacing:-0.219px;">Event Log</div><div class="t" style="left:12.70px;top:627.00px;font-size:19.5px;color:#333;letter-spacing:-0.182px;">Range: 5.64 s – 30.36 s</div><div class="a" style="left:0;top:572px;width:1px;height:396px;background:#cfcfcf"></div><div class="a" style="left:0;top:966px;width:1450px;height:2px;background:#d0d0d0"></div><svg style="left:0;top:0" width="1450" height="968" viewBox="0 0 1450 968"><path d="M98.70 726.40A82 82 0 0 1 99.22 726.40L99.02 758.50A49.9 49.9 0 0 0 98.70 758.50Z" fill="#8db3e8"/><path d="M99.22 726.40A82 82 0 1 1 67.67 884.30L79.82 854.59A49.9 49.9 0 1 0 99.02 758.50Z" fill="#f3d07c"/><path d="M67.67 884.30A82 82 0 0 1 31.39 855.24L57.74 836.90A49.9 49.9 0 0 0 79.82 854.59Z" fill="#ad92ee"/><path d="M31.39 855.24A82 82 0 0 1 16.90 814.07L48.92 811.85A49.9 49.9 0 0 0 57.74 836.90Z" fill="#8dc987"/><path d="M16.90 814.07A82 82 0 0 1 45.87 745.69L66.55 770.24A49.9 49.9 0 0 0 48.92 811.85Z" fill="#dedede"/><path d="M45.87 745.69A82 82 0 0 1 98.70 726.40L98.70 758.50A49.9 49.9 0 0 0 66.55 770.24Z" fill="#f7f7f7"/></svg><div class="t" style="left:58.90px;top:800.00px;font-size:18px;color:#333;letter-spacing:-0.251px;font-weight:bold;">24715 ms</div><div class="t" style="left:281.28px;top:687.00px;font-size:18px;color:#333;">25 ms</div><div class="a" style="left:340px;top:687px;width:17px;height:17px;background:#8db3e8;border:1px solid #6f9fe0"></div><div class="t" style="left:365.00px;top:687.00px;font-size:18px;color:#333;letter-spacing:0.175px;">Loading</div><div class="t" style="left:251.25px;top:725.00px;font-size:18px;color:#333;">13859 ms</div><div class="a" style="left:340px;top:725px;width:17px;height:17px;background:#f3d07c;border:1px solid #e0b95a"></div><div class="t" style="left:366.00px;top:725.00px;font-size:18px;color:#333;letter-spacing:0.122px;">Scripting</div><div class="t" style="left:261.26px;top:762.00px;font-size:18px;color:#333;">2261 ms</div><div class="a" style="left:340px;top:762px;width:17px;height:17px;background:#b096ea;border:1px solid #9b7fe0"></div><div class="t" style="left:365.00px;top:762.00px;font-size:18px;color:#333;letter-spacing:-0.118px;">Rendering</div><div class="t" style="left:262.60px;top:800.00px;font-size:18px;color:#333;">2119 ms</div><div class="a" style="left:340px;top:800px;width:17px;height:17px;background:#8fc888;border:1px solid #74b56c"></div><div class="t" style="left:365.00px;top:800.00px;font-size:18px;color:#333;letter-spacing:0.209px;">Painting</div><div class="t" style="left:261.26px;top:837.00px;font-size:18px;color:#333;">3697 ms</div><div class="a" style="left:340px;top:837px;width:17px;height:17px;background:#dedede;border:1px solid #c4c4c4"></div><div class="t" style="left:366.00px;top:837.00px;font-size:18px;color:#333;letter-spacing:-0.044px;">System</div><div class="t" style="left:261.26px;top:875.00px;font-size:18px;color:#333;">2754 ms</div><div class="a" style="left:340px;top:875px;width:17px;height:17px;background:#fafafa;border:1px solid #dcdcdc"></div><div class="t" style="left:365.00px;top:875.00px;font-size:18px;color:#333;letter-spacing:-0.037px;">Idle</div><div class="t" style="left:250.30px;top:912.00px;font-size:18px;color:#333;letter-spacing:-0.166px;font-weight:bold;">24715 ms</div><div class="t" style="left:366.00px;top:912.00px;font-size:18px;color:#333;letter-spacing:-0.415px;font-weight:bold;">Total</div></body></html>
